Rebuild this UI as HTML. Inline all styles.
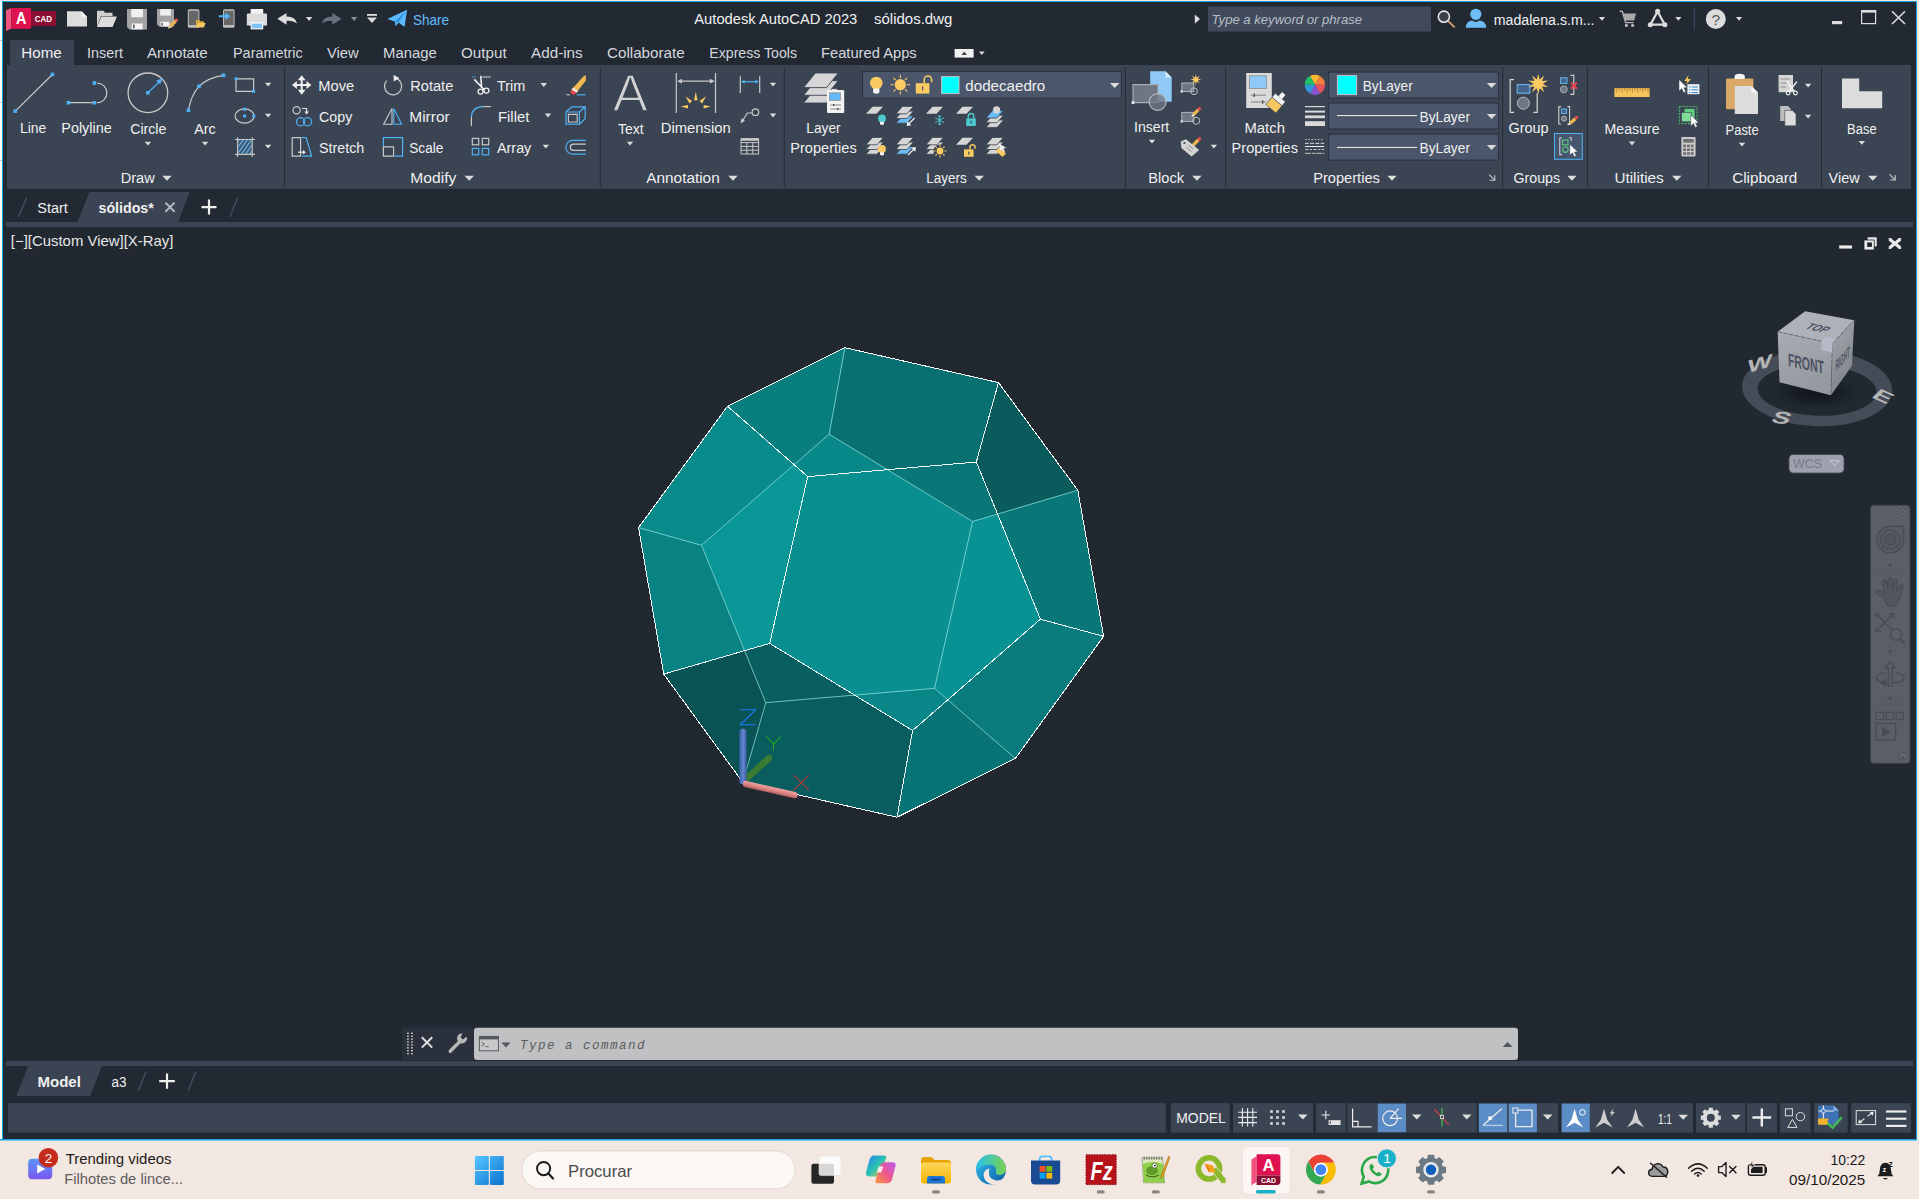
<!DOCTYPE html>
<html lang="en"><head><meta charset="utf-8"><title>Autodesk AutoCAD 2023 - sólidos.dwg</title>
<style>
html,body{margin:0;padding:0;background:#f3e7e2;overflow:hidden}
body{width:1919px;height:1199px;position:relative;font-family:"Liberation Sans",sans-serif}
svg{position:absolute;left:0;top:0;display:block}
text{white-space:pre}
</style></head><body>
<svg width="1919" height="1199" viewBox="0 0 1919 1199">
<rect x="0" y="0" width="1919" height="1199" fill="#f3e7e2" />
<rect x="0" y="0" width="2" height="1139" fill="#ffffff" />
<rect x="0" y="40" width="2" height="1" fill="#c8c8c8" />
<rect x="0" y="102" width="2" height="1" fill="#c8c8c8" />
<rect x="0" y="160" width="2" height="1" fill="#c8c8c8" />
<rect x="2" y="1" width="1915" height="1139" fill="#1a9fe0" />
<rect x="3" y="2" width="1913" height="1137" fill="#222933" />
<rect x="10" y="40" width="64" height="26" fill="#3b4453" />
<rect x="7" y="65" width="1904" height="123.8" fill="#3b4453" />
<rect x="6" y="222" width="1907" height="5" fill="#3b4453" />
<rect x="3" y="227" width="1913" height="834" fill="#212830" />
<rect x="6" y="1061" width="1907" height="5" fill="#3b4453" />
<path d="M15.3 111.1L52.4 74.5" fill="none" stroke="#c9c9c9" stroke-width="1.2" />
<rect x="13.5" y="109.3" width="3.6" height="3.6" fill="#4db2f5" />
<rect x="50.6" y="72.7" width="3.6" height="3.6" fill="#4db2f5" />
<path d="M68.5 102.7H94.4M97 83A9.85 9.85 0 0 1 97 102.7" fill="none" stroke="#c9c9c9" stroke-width="1.2" />
<rect x="66.7" y="100.9" width="3.6" height="3.6" fill="#4db2f5" />
<rect x="92.6" y="100.9" width="3.6" height="3.6" fill="#4db2f5" />
<rect x="92.6" y="81.2" width="3.6" height="3.6" fill="#4db2f5" />
<circle cx="147.9" cy="92.8" r="19.8" fill="none" stroke="#c9c9c9" stroke-width="1.3"/>
<path d="M148 92.8L160 81" fill="none" stroke="#4db2f5" stroke-width="1.2" />
<path d="M162.6 78.2L156.2 80.6L160.2 84.6z" fill="#4db2f5"/>
<rect x="146.1" y="91.0" width="3.6" height="3.6" fill="#4db2f5" />
<path d="M188.4 110.3Q191 95 199 86.3Q208 77.5 223.5 75.3" fill="none" stroke="#c9c9c9" stroke-width="1.2" />
<rect x="186.6" y="108.5" width="3.6" height="3.6" fill="#4db2f5" />
<rect x="197.2" y="84.5" width="3.6" height="3.6" fill="#4db2f5" />
<rect x="221.7" y="73.5" width="3.6" height="3.6" fill="#4db2f5" />
<path d="M236 78.8H253.6V91.3H236z" fill="none" stroke="#c9c9c9" stroke-width="1.2" />
<rect x="234.5" y="77.3" width="3" height="3" fill="#4db2f5" />
<rect x="252.1" y="89.8" width="3" height="3" fill="#4db2f5" />
<path d="M264.9 82.7h6.4l-3.2 3.8z" fill="#dcdcdc"/>
<ellipse cx="244.6" cy="116" rx="9.5" ry="7.2" fill="none" stroke="#c9c9c9" stroke-width="1.2"/>
<rect x="243.1" y="107.7" width="3" height="3" fill="#4db2f5" />
<rect x="243.1" y="114.5" width="3" height="3" fill="#4db2f5" />
<rect x="252.3" y="114.5" width="3" height="3" fill="#4db2f5" />
<path d="M264.9 113.7h6.4l-3.2 3.8z" fill="#dcdcdc"/>
<defs><pattern id="hat" width="3.4" height="3.4" patternUnits="userSpaceOnUse" patternTransform="rotate(-55)"><rect width="3.4" height="3.4" fill="#3d5671"/><rect width="3.4" height="1.1" fill="#6cc0f8"/></pattern></defs>
<rect x="238.2" y="140" width="13.6" height="13.8" fill="url(#hat)" />
<path d="M237.6 137.2V157M252.2 137.2V157M235 139.5H255M235 154.4H255" fill="none" stroke="#c9c9c9" stroke-width="1.1" />
<path d="M264.9 144.7h6.4l-3.2 3.8z" fill="#dcdcdc"/>
<path d="M144.7 141.7h6.4l-3.2 3.8z" fill="#dcdcdc"/>
<path d="M201.9 141.7h6.4l-3.2 3.8z" fill="#dcdcdc"/>
<path d="M162.3 175.7h9.4l-4.7 5z" fill="#dcdcdc"/>
<path d="M301.7 75.3L305.6 80.2H302.7V84H306.5V81.1L311.4 85L306.5 88.9V86H302.7V89.8H305.6L301.7 94.7L297.8 89.8H300.7V86H296.9V88.9L292 85L296.9 81.1V84H300.7V80.2H297.8z" fill="#f0f0f0"/>
<circle cx="296.6" cy="110.3" r="3.6" fill="none" stroke="#c9c9c9" stroke-width="1.2"/>
<path d="M302 108.5H306.6V112" fill="none" stroke="#e0e0e0" stroke-width="1.2" />
<path d="M304.2 111.4H309L306.6 114.6z" fill="#e0e0e0"/>
<circle cx="300.6" cy="121.7" r="4.1" fill="none" stroke="#4db2f5" stroke-width="1.2"/><circle cx="307.6" cy="121.7" r="4.1" fill="none" stroke="#4db2f5" stroke-width="1.2"/>
<path d="M292.2 137.6H300.6V156.2H292.2z" fill="none" stroke="#c9c9c9" stroke-width="1.2" />
<path d="M302 137.6H306.2L311.6 156.2H302" fill="none" stroke="#4db2f5" stroke-width="1.2" />
<path d="M298 152.2H303.5" fill="none" stroke="#f0f0f0" stroke-width="1.2" />
<path d="M303 150L305.8 152.2L303 154.4z" fill="#f0f0f0"/>
<path d="M396.6 78.4A8.6 8.6 0 1 1 386.6 80.6" fill="none" stroke="#c9c9c9" stroke-width="1.3" />
<path d="M393.6 75L399.4 78L393.8 81.6z" fill="#f0f0f0"/>
<path d="M383.6 124.2H392V108.4z" fill="none" stroke="#c9c9c9" stroke-width="1.1" />
<path d="M393.8 108.4V124.2H401.6z" fill="none" stroke="#4db2f5" stroke-width="1.1" />
<path d="M383.4 146V137.6H402.6V156.2H394.4" fill="none" stroke="#4db2f5" stroke-width="1.2" />
<path d="M383.4 146.8H393.6V156.2H383.4z" fill="none" stroke="#c9c9c9" stroke-width="1.2" />
<path d="M472 77H476" fill="none" stroke="#4db2f5" stroke-width="1.1" stroke-dasharray="1.5 1"/>
<path d="M482.4 77H490.8" fill="none" stroke="#c9c9c9" stroke-width="1.1" />
<path d="M480.8 75.8L481.6 88M474.2 79.4L484.6 90" fill="none" stroke="#f0f0f0" stroke-width="1.6" />
<circle cx="480.6" cy="91.6" r="2.5" fill="none" stroke="#f0f0f0" stroke-width="1.3"/><circle cx="486.4" cy="90.6" r="2.5" fill="none" stroke="#f0f0f0" stroke-width="1.3"/>
<path d="M471.4 126V117" fill="none" stroke="#c9c9c9" stroke-width="1.2" />
<path d="M471.4 117Q471.8 107 483 106.6" fill="none" stroke="#4db2f5" stroke-width="1.2" />
<path d="M483 106.6H490.8" fill="none" stroke="#c9c9c9" stroke-width="1.2" />
<rect x="472.3" y="138.4" width="6.4" height="6.4" fill="none" stroke="#c9c9c9" stroke-width="1.2"/>
<rect x="482.3" y="138.4" width="6.4" height="6.4" fill="none" stroke="#c9c9c9" stroke-width="1.2"/>
<rect x="472.3" y="148.4" width="6.4" height="6.4" fill="none" stroke="#4db2f5" stroke-width="1.2"/>
<rect x="482.3" y="148.4" width="6.4" height="6.4" fill="none" stroke="#4db2f5" stroke-width="1.2"/>
<path d="M540.6 83.1h6.4l-3.2 3.8z" fill="#dcdcdc"/>
<path d="M544.8 113.6h6.4l-3.2 3.8z" fill="#dcdcdc"/>
<path d="M542.6 144.8h6.4l-3.2 3.8z" fill="#dcdcdc"/>
<path d="M464.5 175.7h9.4l-4.7 5z" fill="#dcdcdc"/>
<path d="M571.6 89.4L583.4 76.4L585.8 75V80.6L576.4 92.8z" fill="#efb94d"/><path d="M571.6 89.4L576.4 92.8L575 94.2Q572.6 95 571 93.2Q570 91.2 571.6 89.4z" fill="#e8484f"/><path d="M573.4 87.4L578.2 90.8L576.4 92.8L571.6 89.4z" fill="#f4e9e0"/>
<path d="M566.4 94.8H569.8" fill="none" stroke="#c9c9c9" stroke-width="1.1" />
<path d="M576.6 94.8H585.8" fill="none" stroke="#4db2f5" stroke-width="1.1" />
<path d="M566 112H579.4V124.2H566zM566 112L571.6 106.8H585.2L579.4 112M585.2 106.8V118.8L579.4 124.2" fill="none" stroke="#4db2f5" stroke-width="1.2" />
<path d="M568.4 114.4H577.2V122H568.4z" fill="none" stroke="#c9c9c9" stroke-width="1.1" />
<path d="M585.8 140.4H572.8A6.9 6.9 0 0 0 572.8 154.2H585.8" fill="none" stroke="#4db2f5" stroke-width="1.2" />
<path d="M585.8 144.2H573.4A3.1 3.1 0 0 0 573.4 150.4H585.8" fill="none" stroke="#c9c9c9" stroke-width="1.2" />
<text x="612.8" y="110.9" textLength="35.2" lengthAdjust="spacingAndGlyphs" font-family='"Liberation Sans", sans-serif' font-size="51" fill="#d2d2d2" font-weight="normal" font-style="normal" stroke="#3b4453" stroke-width="1.5">A</text>
<path d="M626.8 141.8h6.4l-3.2 3.8z" fill="#dcdcdc"/>
<path d="M676.3 73V113M715.5 73V113M679 81.2H713" fill="none" stroke="#c9c9c9" stroke-width="1.2" />
<path d="M677 81.2L682 78.8V83.6zM714.8 81.2L709.8 78.8V83.6z" fill="#c9c9c9"/>
<path d="M695.8 92L697.6 100.2H694zM685.4 96.2L692 101L689.6 103.4zM706.2 96.2L699.6 101L702 103.4zM680.8 106.4L688 105V108.6zM710.8 106.4L703.6 105V108.6z" fill="#f9cb62"/>
<path d="M740.3 76.3V93M759.7 76.3V93" fill="none" stroke="#c9c9c9" stroke-width="1.2" />
<path d="M743 81.7H757" fill="none" stroke="#4db2f5" stroke-width="1.2" />
<path d="M741 81.7L744.6 79.7V83.7zM759 81.7L755.4 79.7V83.7z" fill="#4db2f5"/>
<path d="M769.8 82.8h6.4l-3.2 3.8z" fill="#dcdcdc"/>
<circle cx="755.4" cy="112.2" r="3.3" fill="none" stroke="#c9c9c9" stroke-width="1.2"/>
<path d="M752.2 113H747.4L742.6 120.6" fill="none" stroke="#c9c9c9" stroke-width="1.2" />
<path d="M740.6 123.4L741.4 118.4L745 120.8z" fill="#c9c9c9"/>
<path d="M769.8 113.6h6.4l-3.2 3.8z" fill="#dcdcdc"/>
<path d="M741 138.6H758.6V154H741zM741 142.6H758.6M741 146.4H758.6M741 150.2H758.6M746.8 142.6V154M752.8 142.6V154" fill="none" stroke="#c9c9c9" stroke-width="1" />
<rect x="741" y="138.6" width="17.6" height="2.2" fill="#c9c9c9" />
<path d="M728.3 175.7h9.4l-4.7 5z" fill="#dcdcdc"/>
<path d="M815.4 88.4H838.2L826.6 103.0H803.6z" fill="#d6d6d6" stroke="#3b4453" stroke-width="0.9"/>
<path d="M815.4 80.7H838.2L826.6 95.3H803.6z" fill="#d6d6d6" stroke="#3b4453" stroke-width="0.9"/>
<path d="M815.4 73.0H838.2L826.6 87.6H803.6z" fill="#d6d6d6" stroke="#3b4453" stroke-width="0.9"/>
<rect x="827" y="90" width="17.2" height="23" rx="1" fill="#f2f2f2"/>
<rect x="829.6" y="92.8" width="10.8" height="7.6" fill="#62b8f5" />
<rect x="829.6" y="92.8" width="10.8" height="7.6" fill="none" stroke="#8a8a8a" stroke-width="0.7"/>
<path d="M830.4 105H841M830.4 109H841" fill="none" stroke="#777" stroke-width="0.9" />
<rect x="833" y="104" width="1.4" height="2" fill="#555" />
<rect x="837" y="108" width="1.4" height="2" fill="#555" />
<rect x="862.5" y="71.5" width="258.8" height="26.8" fill="#4b566b" stroke="#2a303c" stroke-width="1"/>
<circle cx="876.3" cy="83" r="6.3" fill="#f9cb62"/><path d="M873.1 88.4H879.4V92.5Q876.3 95.0 873.1 92.5z" fill="#f4f4f4"/>
<circle cx="900.3" cy="84.7" r="5.6" fill="#f9cb62"/><path d="M906.9 84.7L910.1 84.7M905.0 89.4L907.2 91.6M900.3 91.3L900.3 94.5M895.6 89.4L893.4 91.6M893.7 84.7L890.5 84.7M895.6 80.0L893.4 77.8M900.3 78.1L900.3 74.9M905.0 80.0L907.2 77.8" stroke="#f9cb62" stroke-width="1.1" fill="none"/>
<rect x="915.8" y="83.2" width="13.6" height="10.4" fill="#f9cb62" />
<path d="M924.2 83.2V79.6A3.7 3.7 0 0 1 931.6 79.6V82.2" fill="none" stroke="#f9cb62" stroke-width="1.5"/>
<rect x="922.0" y="86.3" width="1.2" height="4.2" fill="#4b566b" />
<rect x="941.6" y="76.6" width="17.4" height="17" fill="#00ffff" stroke="#c4c4c4" stroke-width="1"/>
<path d="M1109.9 82.9h9.6l-4.8 5z" fill="#dcdcdc"/>
<path d="M872.5 106.8H883.0L876.5 113.8H866.0z" fill="#d6d6d6"/>
<circle cx="882" cy="118.4" r="3.9" fill="#4fc9d0"/><path d="M880.0 121.7H884.0V124.2Q882 125.8 880.0 124.2z" fill="#f4f4f4"/>
<path d="M902.5 115.8H913.5L907.0 123.2H896.0z" fill="#6bbcf3" stroke="#3b4453" stroke-width="0.8"/>
<path d="M902.5 111.1H913.5L907.0 118.5H896.0z" fill="#d6d6d6" stroke="#3b4453" stroke-width="0.8"/>
<path d="M902.5 106.4H913.5L907.0 113.8H896.0z" fill="#d6d6d6" stroke="#3b4453" stroke-width="0.8"/>
<path d="M914.6 118L908.6 124" fill="none" stroke="#f0f0f0" stroke-width="1.2" />
<path d="M906.6 126L907.4 121.2L911.4 125.2z" fill="#f0f0f0"/>
<path d="M932.5 106.8H943.0L936.5 113.8H926.0z" fill="#d6d6d6"/>
<path d="M939.6 115.2V125.2M935.3 117.7L943.9 122.7M935.3 122.7L943.9 117.7M938 115.8L939.6 117.2L941.2 115.8M938 124.6L939.6 123.2L941.2 124.6" fill="none" stroke="#4fc9d0" stroke-width="1" />
<path d="M962.5 106.8H973.0L966.5 113.8H956.0z" fill="#d6d6d6"/>
<rect x="966.2" y="118.4" width="9.6" height="7.6" fill="#4fc9d0" />
<path d="M968.3 118.4V116.1A2.7 2.7 0 0 1 973.7 116.1V118.4" fill="none" stroke="#4fc9d0" stroke-width="1.5"/>
<rect x="970.4" y="120.7" width="1.2" height="3.0" fill="#3b4453" />
<path d="M992.5 120.0H1003.5L997.0 127.4H986.0z" fill="#d6d6d6" stroke="#3b4453" stroke-width="0.8"/>
<path d="M992.5 115.3H1003.5L997.0 122.7H986.0z" fill="#d6d6d6" stroke="#3b4453" stroke-width="0.8"/>
<path d="M992.5 110.6H1003.5L997.0 118.0H986.0z" fill="#6bbcf3" stroke="#3b4453" stroke-width="0.8"/>
<circle cx="996.6" cy="109.8" r="3.6" fill="#d6d6d6"/>
<path d="M872.5 146.8H883.5L877.0 154.2H866.0z" fill="#d6d6d6" stroke="#3b4453" stroke-width="0.8"/>
<path d="M872.5 142.1H883.5L877.0 149.5H866.0z" fill="#d6d6d6" stroke="#3b4453" stroke-width="0.8"/>
<path d="M872.5 137.4H883.5L877.0 144.8H866.0z" fill="#d6d6d6" stroke="#3b4453" stroke-width="0.8"/>
<circle cx="882" cy="149" r="3.9" fill="#f9cb62"/><path d="M880.0 152.3H884.0V154.8Q882 156.4 880.0 154.8z" fill="#f4f4f4"/>
<path d="M902.5 146.8H913.5L907.0 154.2H896.0z" fill="#6bbcf3" stroke="#3b4453" stroke-width="0.8"/>
<path d="M902.5 142.1H913.5L907.0 149.5H896.0z" fill="#d6d6d6" stroke="#3b4453" stroke-width="0.8"/>
<path d="M902.5 137.4H913.5L907.0 144.8H896.0z" fill="#d6d6d6" stroke="#3b4453" stroke-width="0.8"/>
<path d="M908 155L914 149" fill="none" stroke="#f0f0f0" stroke-width="1.2" />
<path d="M916 147L915.2 151.8L911.2 147.8z" fill="#f0f0f0"/>
<path d="M932.5 146.8H943.5L937.0 154.2H926.0z" fill="#d6d6d6" stroke="#3b4453" stroke-width="0.8"/>
<path d="M932.5 142.1H943.5L937.0 149.5H926.0z" fill="#d6d6d6" stroke="#3b4453" stroke-width="0.8"/>
<path d="M932.5 137.4H943.5L937.0 144.8H926.0z" fill="#d6d6d6" stroke="#3b4453" stroke-width="0.8"/>
<circle cx="940" cy="151" r="6.6" fill="#3b4453"/>
<circle cx="940" cy="151" r="3.4" fill="#f9cb62"/><path d="M944.4 151.0L946.4 151.0M943.1 154.1L944.5 155.5M940.0 155.4L940.0 157.4M936.9 154.1L935.5 155.5M935.6 151.0L933.6 151.0M936.9 147.9L935.5 146.5M940.0 146.6L940.0 144.6M943.1 147.9L944.5 146.5" stroke="#f9cb62" stroke-width="1.1" fill="none"/>
<path d="M962.5 137.8H973.0L966.5 144.8H956.0z" fill="#d6d6d6"/>
<rect x="964" y="149.4" width="9.6" height="7.4" fill="#f9cb62" />
<path d="M970.0 149.4V146.8A2.6 2.6 0 0 1 975.1 146.8V148.7" fill="none" stroke="#f9cb62" stroke-width="1.5"/>
<rect x="968.2" y="151.6" width="1.2" height="3.0" fill="#3b4453" />
<path d="M992.5 146.8H1003.5L997.0 154.2H986.0z" fill="#d6d6d6" stroke="#3b4453" stroke-width="0.8"/>
<path d="M992.5 142.1H1003.5L997.0 149.5H986.0z" fill="#d6d6d6" stroke="#3b4453" stroke-width="0.8"/>
<path d="M992.5 137.4H1003.5L997.0 144.8H986.0z" fill="#d6d6d6" stroke="#3b4453" stroke-width="0.8"/>
<path d="M995.6 150.8L1000 147.6L1006 153.6L1002.4 157z" fill="#f9cb62"/><path d="M999 143.6L1006.4 148L1003.4 148.6L1005 151.4L1003.6 152L1002 149.4L1000 151z" fill="#f0f0f0"/>
<path d="M974.5 175.7h9.4l-4.7 5z" fill="#dcdcdc"/>
<path d="M1150.2 71.3H1165.5L1171.7 77.5V101.7H1150.2z" fill="#8fcaf7"/><path d="M1165.5 71.3V77.5H1171.7z" fill="#d6ecfc"/>
<rect x="1133" y="84.6" width="25" height="18" fill="#6e7683" stroke="#a9adb5" stroke-width="1.2"/>
<circle cx="1157.6" cy="102" r="8.4" fill="#6e7683" fill-opacity="0.75" stroke="#b4b8bf" stroke-width="1.2"/>
<rect x="1131.6" y="101.2" width="2.8" height="2.8" fill="#e8e8e8" />
<path d="M1148.8 139.8h6.4l-3.2 3.8z" fill="#dcdcdc"/>
<rect x="1181.8" y="83" width="12" height="8.6" fill="#6e7683" stroke="#b0b4bb" stroke-width="1"/>
<circle cx="1194" cy="91.2" r="3.4" fill="none" stroke="#c0c4ca" stroke-width="1"/>
<rect x="1180.6" y="90.4" width="2.2" height="2.2" fill="#e0e0e0" />
<polygon points="1195.8,74.2 1196.6,77.6 1199.6,75.8 1197.8,78.8 1201.2,79.6 1197.8,80.4 1199.6,83.4 1196.6,81.6 1195.8,85.0 1195.0,81.6 1192.0,83.4 1193.8,80.4 1190.4,79.6 1193.8,78.8 1192.0,75.8 1195.0,77.6" fill="#f9cb62"/>
<rect x="1181.8" y="112.4" width="12" height="9" fill="#6e7683" stroke="#b0b4bb" stroke-width="1"/>
<circle cx="1196.2" cy="120.8" r="3.5" fill="none" stroke="#c0c4ca" stroke-width="1"/>
<rect x="1180.6" y="120.4" width="2.2" height="2.2" fill="#e0e0e0" />
<g transform="translate(1191.4,116.8) rotate(-45.6)"><path d="M0 0L3.2 -1.6V1.6z" fill="#e8dcc8"/><rect x="3.2" y="-1.6" width="6.4" height="3.2" fill="#f2b84f"/><rect x="9.7" y="-1.6" width="3.2" height="3.2" rx="1" fill="#e8484f"/></g>
<path d="M1180.8 141.4L1186 139.2L1199.2 150L1191.6 156.4L1181.4 148z" fill="#d4d4d4"/><circle cx="1184.4" cy="143" r="1.1" fill="#3b4453"/>
<path d="M1186.4 147.2L1191.4 151.4M1188.6 145L1193.4 149" fill="none" stroke="#777" stroke-width="0.8" />
<g transform="translate(1191.2,147.2) rotate(-45.6)"><path d="M0 0L3.4 -1.6V1.6z" fill="#e8dcc8"/><rect x="3.4" y="-1.6" width="6.7" height="3.2" fill="#f2b84f"/><rect x="10.1" y="-1.6" width="3.4" height="3.2" rx="1" fill="#e8484f"/></g>
<path d="M1210.7 144.7h6.4l-3.2 3.8z" fill="#dcdcdc"/>
<path d="M1192.2 175.7h9.4l-4.7 5z" fill="#dcdcdc"/>
<rect x="1246.2" y="73" width="25.6" height="35" fill="#dadada"/>
<rect x="1249.4" y="75.8" width="17.2" height="12.6" fill="#8fcaf7" stroke="#8a8a8a" stroke-width="0.8"/>
<path d="M1251 95.2H1266M1251 102H1266" fill="none" stroke="#777" stroke-width="0.9" />
<rect x="1253.6" y="93.4" width="1.4" height="3.6" fill="#555" />
<rect x="1262" y="100.2" width="1.4" height="3.6" fill="#555" />
<g transform="translate(1278.6,99.6) rotate(40)"><rect x="-6.6" y="2.4" width="13.2" height="9.6" fill="#f5c862" stroke="#3b4453" stroke-width="0.6"/><rect x="-6.6" y="-2.6" width="13.2" height="5" fill="#f4f4f4" stroke="#3b4453" stroke-width="0.5"/><rect x="-2.2" y="-8" width="4.4" height="5.6" fill="#f4f4f4"/></g>
<path d="M1314.9 84.8L1309.9 76.1A10.1 10.1 0 0 1 1320.0 76.1z" fill="#f7b731"/>
<path d="M1314.9 84.8L1320.0 76.1A10.1 10.1 0 0 1 1325.0 84.8z" fill="#f5803e"/>
<path d="M1314.9 84.8L1325.0 84.8A10.1 10.1 0 0 1 1320.0 93.5z" fill="#e8505b"/>
<path d="M1314.9 84.8L1320.0 93.5A10.1 10.1 0 0 1 1309.9 93.5z" fill="#8854d0"/>
<path d="M1314.9 84.8L1309.9 93.5A10.1 10.1 0 0 1 1304.8 84.8z" fill="#2d98da"/>
<path d="M1314.9 84.8L1304.8 84.8A10.1 10.1 0 0 1 1309.9 76.1z" fill="#20bf6b"/>
<rect x="1328.6" y="72.10000000000001" width="169.8" height="26" fill="#4b566b" stroke="#2a303c" stroke-width="1"/>
<rect x="1328.6" y="103.0" width="169.8" height="26" fill="#4b566b" stroke="#2a303c" stroke-width="1"/>
<rect x="1328.6" y="134.1" width="169.8" height="26" fill="#4b566b" stroke="#2a303c" stroke-width="1"/>
<rect x="1337.4" y="75.6" width="19.2" height="19" fill="#00ffff" stroke="#c4c4c4" stroke-width="1"/>
<rect x="1337" y="115" width="80" height="1.1" fill="#e4e4e4" />
<rect x="1337" y="146.9" width="80" height="1.1" fill="#e4e4e4" />
<path d="M1486.8 83.0h9.6l-4.8 5z" fill="#dcdcdc"/>
<path d="M1486.8 114.0h9.6l-4.8 5z" fill="#dcdcdc"/>
<path d="M1486.8 145.0h9.6l-4.8 5z" fill="#dcdcdc"/>
<rect x="1305" y="106" width="20" height="1.2" fill="#dadada" />
<rect x="1305" y="110.6" width="20" height="2" fill="#dadada" />
<rect x="1305" y="115.4" width="20" height="2.8" fill="#dadada" />
<rect x="1305" y="121.2" width="20" height="4.8" fill="#dadada" />
<line x1="1305" y1="139.5" x2="1324.2" y2="139.5" stroke="#c4c4c4" stroke-width="1.1" stroke-dasharray="1.6 1.6"/>
<line x1="1305" y1="143.4" x2="1324.2" y2="143.4" stroke="#c4c4c4" stroke-width="1.1" stroke-dasharray="3.8 1.4"/>
<line x1="1305" y1="146.5" x2="1324.2" y2="146.5" stroke="#ececec" stroke-width="1.1" stroke-dasharray="20 0"/>
<line x1="1305" y1="149.5" x2="1324.2" y2="149.5" stroke="#c4c4c4" stroke-width="1.1" stroke-dasharray="3.4 1.4 2.2 1.4"/>
<line x1="1305" y1="153.4" x2="1324.2" y2="153.4" stroke="#a8a8a8" stroke-width="1.1" stroke-dasharray="6 0.8 3.5 0.8"/>
<path d="M1387.3 175.7h9.4l-4.7 5z" fill="#dcdcdc"/>
<path d="M1489.2 174.6L1494.2 179.6M1494.8 175.2V180.2H1489.8" fill="none" stroke="#c8c8c8" stroke-width="1.1" />
<path d="M1889.6 174.4L1894.6 179.4M1895.1999999999998 175.0V180.0H1890.1999999999998" fill="none" stroke="#c8c8c8" stroke-width="1.1" />
<path d="M1514 79.6H1510.2V112.4H1514M1537.2 93V112.4H1533.4" fill="none" stroke="#d8d8d8" stroke-width="1.2" />
<rect x="1517.2" y="84.6" width="12.6" height="8.6" fill="#46658c" stroke="#6bbcf3" stroke-width="1"/><circle cx="1523.4" cy="103.2" r="6" fill="#6e7683" stroke="#b4b8bf" stroke-width="1"/>
<polygon points="1538.2,73.4 1539.6,79.4 1544.3,75.4 1541.9,81.1 1548.1,80.6 1542.8,83.8 1548.1,87.0 1541.9,86.5 1544.3,92.2 1539.6,88.2 1538.2,94.2 1536.8,88.2 1532.1,92.2 1534.5,86.5 1528.3,87.0 1533.6,83.8 1528.3,80.6 1534.5,81.1 1532.1,75.4 1536.8,79.4" fill="#f9cb62"/>
<path d="M1570.4 75.4H1573.8V94.4H1570.4" fill="none" stroke="#d0d0d0" stroke-width="1.1" />
<rect x="1560.4" y="77.8" width="6.6" height="5.6" fill="#46658c" stroke="#6bbcf3" stroke-width="0.9"/><circle cx="1563.8" cy="89.4" r="3.4" fill="#6e7683" stroke="#b4b8bf" stroke-width="0.9"/>
<path d="M1571 82.6L1576.8 88.8M1576.8 82.6L1571 88.8" fill="none" stroke="#f0464f" stroke-width="2" />
<path d="M1561 106.6H1558.8V124H1561M1567.4 106.6H1569.6V124H1567.4" fill="none" stroke="#d0d0d0" stroke-width="1.1" />
<rect x="1561.4" y="109" width="5.2" height="4.6" fill="#46658c" stroke="#6bbcf3" stroke-width="0.9"/><circle cx="1564" cy="118.6" r="2.6" fill="#6e7683" stroke="#b4b8bf" stroke-width="0.9"/>
<g transform="translate(1567.6,125.6) rotate(-42.0)"><path d="M0 0L3.4 -1.6V1.6z" fill="#e8dcc8"/><rect x="3.4" y="-1.6" width="6.9" height="3.2" fill="#f2b84f"/><rect x="10.3" y="-1.6" width="3.4" height="3.2" rx="1" fill="#e8484f"/></g>
<rect x="1554.5" y="133.5" width="27.8" height="25.8" fill="#45566e" stroke="#4db2f5" stroke-width="1"/>
<path d="M1562 137.8H1559.8V154.6H1562M1569 137.8H1571.2V141" fill="none" stroke="#d0d0d0" stroke-width="1.1" />
<rect x="1562.6" y="140" width="5.4" height="4.8" fill="none" stroke="#5fd07f" stroke-width="1.1"/><circle cx="1565.4" cy="149.6" r="2.8" fill="none" stroke="#5fd07f" stroke-width="1.1"/>
<path transform="translate(1569.8,144.2) scale(0.95)" d="M0 0V11.5L2.8 9L4.8 13.2L6.8 12.2L4.8 8.2H8.4z" fill="#ffffff" stroke="#3b4453" stroke-width="0.5"/>
<path d="M1567.2 175.7h9.4l-4.7 5z" fill="#dcdcdc"/>
<rect x="1614.4" y="88.2" width="35.2" height="8.8" fill="#f5c45a" />
<rect x="1616.4" y="88.2" width="0.9" height="4.4" fill="#b8892e" />
<rect x="1619.0" y="88.2" width="0.9" height="2.8" fill="#b8892e" />
<rect x="1621.6" y="88.2" width="0.9" height="4.4" fill="#b8892e" />
<rect x="1624.2" y="88.2" width="0.9" height="2.8" fill="#b8892e" />
<rect x="1626.8" y="88.2" width="0.9" height="4.4" fill="#b8892e" />
<rect x="1629.4" y="88.2" width="0.9" height="2.8" fill="#b8892e" />
<rect x="1632.0" y="88.2" width="0.9" height="4.4" fill="#b8892e" />
<rect x="1634.6" y="88.2" width="0.9" height="2.8" fill="#b8892e" />
<rect x="1637.2" y="88.2" width="0.9" height="4.4" fill="#b8892e" />
<rect x="1639.8" y="88.2" width="0.9" height="2.8" fill="#b8892e" />
<rect x="1642.4" y="88.2" width="0.9" height="4.4" fill="#b8892e" />
<rect x="1645.0" y="88.2" width="0.9" height="2.8" fill="#b8892e" />
<rect x="1647.6" y="88.2" width="0.9" height="4.4" fill="#b8892e" />
<path d="M1628.8 141.6h6.4l-3.2 3.8z" fill="#dcdcdc"/>
<path transform="translate(1679,79.6) scale(1.0)" d="M0 0V11.5L2.8 9L4.8 13.2L6.8 12.2L4.8 8.2H8.4z" fill="#ffffff" stroke="#3b4453" stroke-width="0.5"/>
<rect x="1687.4" y="84.2" width="12" height="10" fill="#f4f4f4"/>
<rect x="1691.6" y="86.4" width="6.4" height="1.1" fill="#3a8fd8" />
<rect x="1689" y="86.4" width="1.4" height="1.1" fill="#3a8fd8" />
<rect x="1691.6" y="89.2" width="6.4" height="1.1" fill="#3a8fd8" />
<rect x="1689" y="89.2" width="1.4" height="1.1" fill="#3a8fd8" />
<rect x="1691.6" y="92" width="6.4" height="1.1" fill="#3a8fd8" />
<rect x="1689" y="92" width="1.4" height="1.1" fill="#3a8fd8" />
<path d="M1688.6 75L1684.4 81H1687.4L1685.8 85L1691 79H1687.8z" fill="#f9cb62"/>
<rect x="1679.4" y="106.6" width="17.6" height="17" fill="none" stroke="#4fc06a" stroke-width="1" stroke-dasharray="2 1.2"/><rect x="1684.6" y="108.8" width="10" height="9.4" fill="#5fcf7f"/><rect x="1681.6" y="112.4" width="10" height="9.4" fill="#7fdc98" stroke="#3b4453" stroke-width="0.6"/>
<path transform="translate(1690.8,115) scale(0.95)" d="M0 0V11.5L2.8 9L4.8 13.2L6.8 12.2L4.8 8.2H8.4z" fill="#ffffff" stroke="#3b4453" stroke-width="0.5"/>
<rect x="1681.4" y="137" width="14.2" height="19.6" rx="1" fill="#cacaca"/>
<rect x="1683.2" y="139" width="10.6" height="3.6" fill="#6e6e6e" />
<rect x="1683.2" y="144.6" width="2.8" height="2.6" fill="#6e6e6e" />
<rect x="1687.0" y="144.6" width="2.8" height="2.6" fill="#6e6e6e" />
<rect x="1690.8" y="144.6" width="2.8" height="2.6" fill="#6e6e6e" />
<rect x="1683.2" y="148.4" width="2.8" height="2.6" fill="#6e6e6e" />
<rect x="1687.0" y="148.4" width="2.8" height="2.6" fill="#6e6e6e" />
<rect x="1690.8" y="148.4" width="2.8" height="2.6" fill="#6e6e6e" />
<rect x="1683.2" y="152.2" width="2.8" height="2.6" fill="#6e6e6e" />
<rect x="1687.0" y="152.2" width="2.8" height="2.6" fill="#6e6e6e" />
<rect x="1690.8" y="152.2" width="2.8" height="2.6" fill="#6e6e6e" />
<path d="M1672.1 175.7h9.4l-4.7 5z" fill="#dcdcdc"/>
<rect x="1726" y="78.4" width="27.4" height="30.8" rx="1.2" fill="#d9a766"/><path d="M1734.6 79V76.4Q1734.6 74 1739.6 73.8Q1744.8 74 1744.8 76.4V79z" fill="#f4f4f4"/>
<path d="M1734.8 86H1751.4L1758 92.6V114H1734.8z" fill="#dcdcdc"/><path d="M1751.4 86V92.6H1758z" fill="#f8f8f8"/>
<path d="M1738.8 142.7h6.4l-3.2 3.8z" fill="#dcdcdc"/>
<rect x="1778.6" y="75" width="14.4" height="17.2" fill="#d4d4d4"/>
<path d="M1780.6 79H1790M1780.6 83H1788M1780.6 87H1786" fill="none" stroke="#8a8a8a" stroke-width="0.9" />
<path d="M1786.6 81L1794.4 91.4M1796.8 81.6L1789.4 91.4" fill="none" stroke="#f4f4f4" stroke-width="1.5" />
<circle cx="1788.2" cy="93" r="1.9" fill="none" stroke="#f4f4f4" stroke-width="1.1"/><circle cx="1795.4" cy="93" r="1.9" fill="none" stroke="#f4f4f4" stroke-width="1.1"/>
<path d="M1804.9 83.7h6.4l-3.2 3.8z" fill="#dcdcdc"/>
<path d="M1780.2 106H1788L1791 109V121H1780.2z" fill="#bdbdbd"/><path d="M1784.8 110.4H1792.4L1796 114V125.8H1784.8z" fill="#dcdcdc" stroke="#3b4453" stroke-width="0.6"/>
<path d="M1804.9 114.7h6.4l-3.2 3.8z" fill="#dcdcdc"/>
<path d="M1842 78.4H1859.2V91.2H1882.2V108.2H1842z" fill="#dcdcdc"/>
<path d="M1858.6 141.0h6.4l-3.2 3.8z" fill="#dcdcdc"/>
<path d="M1868.1 175.7h9.4l-4.7 5z" fill="#dcdcdc"/>
<path d="M6 10.3L11.3 8V28.8L6 31z" fill="#f0557f"/>
<rect x="11.3" y="8" width="19.7" height="20.8" fill="#e0114f" />
<rect x="31" y="11" width="25" height="15" fill="#8a0e33" />
<text x="16.0" y="23.9" textLength="10.4" lengthAdjust="spacingAndGlyphs" font-family='"Liberation Sans", sans-serif' font-size="15.6" fill="#ffffff" font-weight="bold" font-style="normal" >A</text>
<text x="34.8" y="21.8" textLength="17.2" lengthAdjust="spacingAndGlyphs" font-family='"Liberation Sans", sans-serif' font-size="8.7" fill="#ffffff" font-weight="bold" font-style="normal" >CAD</text>
<path d="M67 11.3H81.5L87 16.8V26.5H67z" fill="#dcdcdc"/><path d="M81.5 11.3V16.8H87z" fill="#f6f6f6"/>
<path d="M97 26.5V10.8H103.5L105 12.8H112.5V16H101z" fill="#cfcfcf"/><path d="M101.3 16.6H116.9L112.6 26.9H97z" fill="#dcdcdc"/>
<path d="M127 9H147V29.4H129.5L127 26.9z" fill="#a3a3a3"/>
<rect x="131.2" y="9" width="11.8" height="8.2" fill="#f0f0f0" />
<rect x="131.6" y="23.5" width="11" height="5.9" fill="#f4f4f4" />
<rect x="133" y="24.6" width="1.6" height="3.6" fill="#555" />
<path d="M157 9H174V26.6H159.2L157 24.5z" fill="#a3a3a3"/>
<rect x="160.2" y="9" width="10.6" height="6.6" fill="#f0f0f0" />
<rect x="160.5" y="21.8" width="9" height="4.8" fill="#f4f4f4" />
<rect x="161.5" y="22.8" width="1.4" height="2.8" fill="#555" />
<path d="M168 28.6L169.2 25.2L174.6 19.6L177 22L171.5 27.6z" fill="#e9b45a"/><path d="M174.6 19.6L175.6 18.6Q176.6 18 177.5 19L178 19.6Q178.4 20.5 177.8 21.2L177 22z" fill="#e2555a"/><path d="M168 28.6L169.2 25.2L171.5 27.6z" fill="#d8d0c0"/>
<rect x="187.8" y="9.3" width="11.6" height="18.4" rx="1.5" fill="#bdbdbd"/>
<rect x="188.8" y="10.8" width="9.6" height="14.2" fill="#666" />
<path d="M196 27.3V20H199.5L200.5 21.2H204V22.8z" fill="#d9a441"/><path d="M197.8 23H205.7L203.7 27.6H196z" fill="#f5c862"/>
<rect x="223" y="9.3" width="11.6" height="18.4" rx="1.5" fill="#bdbdbd"/>
<rect x="224" y="10.8" width="9.6" height="14.2" fill="#666" />
<path d="M218.8 15.3H225V12.6L230.6 16.3L225 20V17.3H218.8z" fill="#52b4f7"/>
<rect x="250.6" y="9" width="12.6" height="6" fill="#f4f4f4" />
<path d="M246.8 14.5Q246.8 13.6 247.8 13.6H266Q267 13.6 267 14.5V25.6H246.8z" fill="#dcdcdc"/>
<rect x="250.6" y="22" width="12.6" height="7.4" fill="#f4f4f4" />
<rect x="251.8" y="23.6" width="10.2" height="4.6" fill="#7ec3f7" />
<path d="M277.3 18.8L286.5 13V16.6Q295.5 16.4 297.1 23.6Q292.5 20.2 286.5 21V24.8z" fill="#dcdcdc"/>
<path d="M305.9 17.1h6.4l-3.2 3.8z" fill="#dcdcdc"/>
<path d="M341.5 18.8L332.3 13V16.6Q323.3 16.4 321.9 23.6Q326.3 20.2 332.3 21V24.8z" fill="#6a707c"/>
<path d="M350.9 17.1h6.4l-3.2 3.8z" fill="#8a8f99"/>
<rect x="367" y="14" width="10" height="1.8" fill="#dcdcdc" />
<path d="M367.0 17.5h10l-5.0 5.4z" fill="#dcdcdc"/>
<path d="M387.3 19L407.1 9.8L404.6 26.9L398.5 22.6L395.6 26.6L394.8 21.6z" fill="#5ab9ff"/><path d="M394.8 21.6L405.6 11.4L398.5 22.6" fill="#2f8fd6"/>
<path d="M1194.8 14.4L1200 19.1L1194.8 23.8z" fill="#dcdcdc"/>
<line x1="1448.3" y1="21.2" x2="1454.6" y2="27.4" stroke="#d8a36a" stroke-width="1.8"/><circle cx="1443.9" cy="16.7" r="5.6" fill="#3a3f4a" stroke="#e4e4e4" stroke-width="1.6"/>
<circle cx="1475.8" cy="14.3" r="5.6" fill="#6cbcf5"/><path d="M1465.8 27.8Q1466 21.5 1472 20.6Q1475.8 23.2 1479.6 20.6Q1486 21.5 1486.3 27.8z" fill="#6cbcf5"/>
<path d="M1598.9 17.0h6.2l-3.1 3.7z" fill="#dcdcdc"/>
<path d="M1619.8 11L1622.4 11.6L1625.6 22.6H1633.6" fill="none" stroke="#b5b5b5" stroke-width="1.4"/><path d="M1623.2 13.6H1636L1634.2 20.4H1625.2z" fill="#a8a8a8"/><circle cx="1626.4" cy="25.4" r="1.6" fill="#b5b5b5"/><circle cx="1632.6" cy="25.4" r="1.6" fill="#b5b5b5"/>
<path d="M1657.6 11.5L1650.4 24.6H1664.8z" fill="none" stroke="#dcdcdc" stroke-width="2.2" stroke-linejoin="round"/><circle cx="1657.6" cy="11.3" r="2.5" fill="#dcdcdc"/><circle cx="1650.3" cy="24.7" r="2.5" fill="#dcdcdc"/><circle cx="1664.9" cy="24.7" r="2.5" fill="#dcdcdc"/>
<path d="M1675.3 17.0h6.2l-3.1 3.7z" fill="#dcdcdc"/>
<rect x="1693.8" y="7.8" width="1" height="22" fill="#3a4a63" />
<circle cx="1715.8" cy="19" r="10" fill="#dcdcdc"/>
<text x="1711.6" y="24.6"  font-family='"Liberation Sans", sans-serif' font-size="15.5" fill="#555" font-weight="normal" font-style="normal" >?</text>
<path d="M1735.9 17.0h6.2l-3.1 3.7z" fill="#dcdcdc"/>
<rect x="1832" y="21" width="10.2" height="3.2" fill="#dcdcdc" />
<rect x="1861.6" y="10.6" width="14" height="13" fill="none" stroke="#dcdcdc" stroke-width="1.2"/>
<rect x="1861" y="10" width="15.2" height="2.6" fill="#dcdcdc" />
<path d="M1892 11.2L1905 24M1905 11.2L1892 24" stroke="#dcdcdc" stroke-width="1.6" fill="none"/>
<rect x="954.6" y="49" width="19" height="8.6" fill="#f0f0f0"/>
<path d="M961.5 55L964.2 51.6L967 55z" fill="#444"/>
<path d="M979.0 51.6h5.6l-2.8 3.4z" fill="#dcdcdc"/>
<text x="413.0" y="25.0" textLength="36.0" lengthAdjust="spacingAndGlyphs" font-family='"Liberation Sans", sans-serif' font-size="15.5" fill="#62bdff" font-weight="normal" font-style="normal" >Share</text>
<text x="694.3" y="24.0" textLength="163.0" lengthAdjust="spacingAndGlyphs" font-family='"Liberation Sans", sans-serif' font-size="15.3" fill="#f0f0f0" font-weight="normal" font-style="normal" >Autodesk AutoCAD 2023</text>
<text x="874.0" y="24.0" textLength="78.3" lengthAdjust="spacingAndGlyphs" font-family='"Liberation Sans", sans-serif' font-size="15.3" fill="#f0f0f0" font-weight="normal" font-style="normal" >sólidos.dwg</text>
<rect x="1208" y="6.5" width="223" height="25" fill="#404a5c" />
<text x="1211.6" y="24.0" textLength="150.4" lengthAdjust="spacingAndGlyphs" font-family='"Liberation Sans", sans-serif' font-size="13.5" fill="#b9bec6" font-weight="normal" font-style="italic" >Type a keyword or phrase</text>
<text x="1493.8" y="24.8" textLength="100.7" lengthAdjust="spacingAndGlyphs" font-family='"Liberation Sans", sans-serif' font-size="15.3" fill="#f0f0f0" font-weight="normal" font-style="normal" >madalena.s.m...</text>
<text x="21.3" y="58.3" textLength="40.4" lengthAdjust="spacingAndGlyphs" font-family='"Liberation Sans", sans-serif' font-size="15.3" fill="#f0f0f0" font-weight="normal" font-style="normal" >Home</text>
<text x="87.0" y="58.3" textLength="36.0" lengthAdjust="spacingAndGlyphs" font-family='"Liberation Sans", sans-serif' font-size="15.3" fill="#d5d8dc" font-weight="normal" font-style="normal" >Insert</text>
<text x="147.0" y="58.3" textLength="60.7" lengthAdjust="spacingAndGlyphs" font-family='"Liberation Sans", sans-serif' font-size="15.3" fill="#d5d8dc" font-weight="normal" font-style="normal" >Annotate</text>
<text x="233.0" y="58.3" textLength="69.7" lengthAdjust="spacingAndGlyphs" font-family='"Liberation Sans", sans-serif' font-size="15.3" fill="#d5d8dc" font-weight="normal" font-style="normal" >Parametric</text>
<text x="327.0" y="58.3" textLength="31.7" lengthAdjust="spacingAndGlyphs" font-family='"Liberation Sans", sans-serif' font-size="15.3" fill="#d5d8dc" font-weight="normal" font-style="normal" >View</text>
<text x="383.0" y="58.3" textLength="53.7" lengthAdjust="spacingAndGlyphs" font-family='"Liberation Sans", sans-serif' font-size="15.3" fill="#d5d8dc" font-weight="normal" font-style="normal" >Manage</text>
<text x="461.0" y="58.3" textLength="45.7" lengthAdjust="spacingAndGlyphs" font-family='"Liberation Sans", sans-serif' font-size="15.3" fill="#d5d8dc" font-weight="normal" font-style="normal" >Output</text>
<text x="531.0" y="58.3" textLength="51.7" lengthAdjust="spacingAndGlyphs" font-family='"Liberation Sans", sans-serif' font-size="15.3" fill="#d5d8dc" font-weight="normal" font-style="normal" >Add-ins</text>
<text x="607.0" y="58.3" textLength="77.7" lengthAdjust="spacingAndGlyphs" font-family='"Liberation Sans", sans-serif' font-size="15.3" fill="#d5d8dc" font-weight="normal" font-style="normal" >Collaborate</text>
<text x="709.3" y="58.3" textLength="87.7" lengthAdjust="spacingAndGlyphs" font-family='"Liberation Sans", sans-serif' font-size="15.3" fill="#d5d8dc" font-weight="normal" font-style="normal" >Express Tools</text>
<text x="821.0" y="58.3" textLength="95.7" lengthAdjust="spacingAndGlyphs" font-family='"Liberation Sans", sans-serif' font-size="15.3" fill="#d5d8dc" font-weight="normal" font-style="normal" >Featured Apps</text>
<rect x="284.1" y="67" width="1" height="120" fill="#262c36" />
<rect x="599.8" y="67" width="1" height="120" fill="#262c36" />
<rect x="783.8" y="67" width="1" height="120" fill="#262c36" />
<rect x="1124.9" y="67" width="1" height="120" fill="#262c36" />
<rect x="1225.1" y="67" width="1" height="120" fill="#262c36" />
<rect x="1502.2" y="67" width="1" height="120" fill="#262c36" />
<rect x="1586.9" y="67" width="1" height="120" fill="#262c36" />
<rect x="1708.0" y="67" width="1" height="120" fill="#262c36" />
<rect x="1821.0" y="67" width="1" height="120" fill="#262c36" />
<text x="20.0" y="132.7" textLength="26.3" lengthAdjust="spacingAndGlyphs" font-family='"Liberation Sans", sans-serif' font-size="15.3" fill="#f0f0f0" font-weight="normal" font-style="normal" >Line</text>
<text x="61.3" y="132.7" textLength="50.4" lengthAdjust="spacingAndGlyphs" font-family='"Liberation Sans", sans-serif' font-size="15.3" fill="#f0f0f0" font-weight="normal" font-style="normal" >Polyline</text>
<text x="130.3" y="133.7" textLength="36.0" lengthAdjust="spacingAndGlyphs" font-family='"Liberation Sans", sans-serif' font-size="15.3" fill="#f0f0f0" font-weight="normal" font-style="normal" >Circle</text>
<text x="194.3" y="133.7" textLength="21.4" lengthAdjust="spacingAndGlyphs" font-family='"Liberation Sans", sans-serif' font-size="15.3" fill="#f0f0f0" font-weight="normal" font-style="normal" >Arc</text>
<text x="318.3" y="91.0" textLength="36.0" lengthAdjust="spacingAndGlyphs" font-family='"Liberation Sans", sans-serif' font-size="15.3" fill="#f0f0f0" font-weight="normal" font-style="normal" >Move</text>
<text x="319.0" y="122.0" textLength="33.3" lengthAdjust="spacingAndGlyphs" font-family='"Liberation Sans", sans-serif' font-size="15.3" fill="#f0f0f0" font-weight="normal" font-style="normal" >Copy</text>
<text x="319.0" y="153.0" textLength="45.3" lengthAdjust="spacingAndGlyphs" font-family='"Liberation Sans", sans-serif' font-size="15.3" fill="#f0f0f0" font-weight="normal" font-style="normal" >Stretch</text>
<text x="410.3" y="91.0" textLength="43.0" lengthAdjust="spacingAndGlyphs" font-family='"Liberation Sans", sans-serif' font-size="15.3" fill="#f0f0f0" font-weight="normal" font-style="normal" >Rotate</text>
<text x="409.3" y="122.0" textLength="40.4" lengthAdjust="spacingAndGlyphs" font-family='"Liberation Sans", sans-serif' font-size="15.3" fill="#f0f0f0" font-weight="normal" font-style="normal" >Mirror</text>
<text x="409.3" y="153.0" textLength="34.0" lengthAdjust="spacingAndGlyphs" font-family='"Liberation Sans", sans-serif' font-size="15.3" fill="#f0f0f0" font-weight="normal" font-style="normal" >Scale</text>
<text x="497.0" y="91.0" textLength="28.3" lengthAdjust="spacingAndGlyphs" font-family='"Liberation Sans", sans-serif' font-size="15.3" fill="#f0f0f0" font-weight="normal" font-style="normal" >Trim</text>
<text x="498.0" y="122.0" textLength="31.3" lengthAdjust="spacingAndGlyphs" font-family='"Liberation Sans", sans-serif' font-size="15.3" fill="#f0f0f0" font-weight="normal" font-style="normal" >Fillet</text>
<text x="497.0" y="153.0" textLength="34.3" lengthAdjust="spacingAndGlyphs" font-family='"Liberation Sans", sans-serif' font-size="15.3" fill="#f0f0f0" font-weight="normal" font-style="normal" >Array</text>
<text x="120.7" y="183.0" textLength="34.0" lengthAdjust="spacingAndGlyphs" font-family='"Liberation Sans", sans-serif' font-size="15.3" fill="#f0f0f0" font-weight="normal" font-style="normal" >Draw</text>
<text x="410.3" y="183.0" textLength="46.0" lengthAdjust="spacingAndGlyphs" font-family='"Liberation Sans", sans-serif' font-size="15.3" fill="#f0f0f0" font-weight="normal" font-style="normal" >Modify</text>
<text x="618.0" y="133.7" textLength="25.7" lengthAdjust="spacingAndGlyphs" font-family='"Liberation Sans", sans-serif' font-size="15.3" fill="#f0f0f0" font-weight="normal" font-style="normal" >Text</text>
<text x="660.7" y="132.7" textLength="70.0" lengthAdjust="spacingAndGlyphs" font-family='"Liberation Sans", sans-serif' font-size="15.3" fill="#f0f0f0" font-weight="normal" font-style="normal" >Dimension</text>
<text x="806.3" y="132.7" textLength="34.4" lengthAdjust="spacingAndGlyphs" font-family='"Liberation Sans", sans-serif' font-size="15.3" fill="#f0f0f0" font-weight="normal" font-style="normal" >Layer</text>
<text x="790.3" y="153.0" textLength="66.4" lengthAdjust="spacingAndGlyphs" font-family='"Liberation Sans", sans-serif' font-size="15.3" fill="#f0f0f0" font-weight="normal" font-style="normal" >Properties</text>
<text x="965.3" y="91.0" textLength="80.0" lengthAdjust="spacingAndGlyphs" font-family='"Liberation Sans", sans-serif' font-size="15.3" fill="#f0f0f0" font-weight="normal" font-style="normal" >dodecaedro</text>
<text x="646.3" y="183.0" textLength="73.4" lengthAdjust="spacingAndGlyphs" font-family='"Liberation Sans", sans-serif' font-size="15.3" fill="#f0f0f0" font-weight="normal" font-style="normal" >Annotation</text>
<text x="926.3" y="183.0" textLength="40.4" lengthAdjust="spacingAndGlyphs" font-family='"Liberation Sans", sans-serif' font-size="15.3" fill="#f0f0f0" font-weight="normal" font-style="normal" >Layers</text>
<text x="1134.0" y="131.7" textLength="35.3" lengthAdjust="spacingAndGlyphs" font-family='"Liberation Sans", sans-serif' font-size="15.3" fill="#f0f0f0" font-weight="normal" font-style="normal" >Insert</text>
<text x="1148.3" y="183.0" textLength="35.7" lengthAdjust="spacingAndGlyphs" font-family='"Liberation Sans", sans-serif' font-size="15.3" fill="#f0f0f0" font-weight="normal" font-style="normal" >Block</text>
<text x="1244.5" y="133.0" textLength="40.4" lengthAdjust="spacingAndGlyphs" font-family='"Liberation Sans", sans-serif' font-size="15.3" fill="#f0f0f0" font-weight="normal" font-style="normal" >Match</text>
<text x="1231.6" y="153.0" textLength="66.4" lengthAdjust="spacingAndGlyphs" font-family='"Liberation Sans", sans-serif' font-size="15.3" fill="#f0f0f0" font-weight="normal" font-style="normal" >Properties</text>
<text x="1362.8" y="90.7" textLength="49.9" lengthAdjust="spacingAndGlyphs" font-family='"Liberation Sans", sans-serif' font-size="15.3" fill="#f0f0f0" font-weight="normal" font-style="normal" >ByLayer</text>
<text x="1419.5" y="121.7" textLength="50.5" lengthAdjust="spacingAndGlyphs" font-family='"Liberation Sans", sans-serif' font-size="15.3" fill="#f0f0f0" font-weight="normal" font-style="normal" >ByLayer</text>
<text x="1419.5" y="153.0" textLength="50.5" lengthAdjust="spacingAndGlyphs" font-family='"Liberation Sans", sans-serif' font-size="15.3" fill="#f0f0f0" font-weight="normal" font-style="normal" >ByLayer</text>
<text x="1508.5" y="133.0" textLength="40.1" lengthAdjust="spacingAndGlyphs" font-family='"Liberation Sans", sans-serif' font-size="15.3" fill="#f0f0f0" font-weight="normal" font-style="normal" >Group</text>
<text x="1604.6" y="134.0" textLength="55.0" lengthAdjust="spacingAndGlyphs" font-family='"Liberation Sans", sans-serif' font-size="15.3" fill="#f0f0f0" font-weight="normal" font-style="normal" >Measure</text>
<text x="1725.6" y="135.0" textLength="33.0" lengthAdjust="spacingAndGlyphs" font-family='"Liberation Sans", sans-serif' font-size="15.3" fill="#f0f0f0" font-weight="normal" font-style="normal" >Paste</text>
<text x="1847.1" y="134.0" textLength="29.6" lengthAdjust="spacingAndGlyphs" font-family='"Liberation Sans", sans-serif' font-size="15.3" fill="#f0f0f0" font-weight="normal" font-style="normal" >Base</text>
<text x="1313.2" y="183.0" textLength="66.7" lengthAdjust="spacingAndGlyphs" font-family='"Liberation Sans", sans-serif' font-size="15.3" fill="#f0f0f0" font-weight="normal" font-style="normal" >Properties</text>
<text x="1513.5" y="183.0" textLength="46.5" lengthAdjust="spacingAndGlyphs" font-family='"Liberation Sans", sans-serif' font-size="15.3" fill="#f0f0f0" font-weight="normal" font-style="normal" >Groups</text>
<text x="1614.4" y="183.0" textLength="49.3" lengthAdjust="spacingAndGlyphs" font-family='"Liberation Sans", sans-serif' font-size="15.3" fill="#f0f0f0" font-weight="normal" font-style="normal" >Utilities</text>
<text x="1732.2" y="183.0" textLength="65.1" lengthAdjust="spacingAndGlyphs" font-family='"Liberation Sans", sans-serif' font-size="15.3" fill="#f0f0f0" font-weight="normal" font-style="normal" >Clipboard</text>
<text x="1828.5" y="183.0" textLength="31.2" lengthAdjust="spacingAndGlyphs" font-family='"Liberation Sans", sans-serif' font-size="15.3" fill="#f0f0f0" font-weight="normal" font-style="normal" >View</text>
<path d="M77.5 222L89.4 192H189.7L178.2 222z" fill="#3b4453"/>
<path d="M18.3 216.9L26.8 197.5M230 216.9L237.8 197.5" stroke="#4a5262" stroke-width="1.2" fill="none"/>
<text x="37.3" y="212.8" textLength="30.5" lengthAdjust="spacingAndGlyphs" font-family='"Liberation Sans", sans-serif' font-size="15.3" fill="#f0f0f0" font-weight="normal" font-style="normal" >Start</text>
<text x="98.5" y="212.8" textLength="55.3" lengthAdjust="spacingAndGlyphs" font-family='"Liberation Sans", sans-serif' font-size="15.3" fill="#f0f0f0" font-weight="bold" font-style="normal" >sólidos*</text>
<path d="M165.4 202.6L174.6 211.8M174.6 202.6L165.4 211.8" stroke="#b4b9c2" stroke-width="2" fill="none"/>
<path d="M201.5 207.1H216.5M209 199.6V214.6" stroke="#f0f0f0" stroke-width="2.2" fill="none"/>
<text x="10.8" y="246.3" textLength="162.6" lengthAdjust="spacingAndGlyphs" font-family='"Liberation Sans", sans-serif' font-size="14.3" fill="#e6e6e6" font-weight="normal" font-style="normal" >[−][Custom View][X-Ray]</text>
<defs>
<clipPath id="cFC"><polygon points="807.7,476.6 976.3,462.0 1040.4,619.2 912.6,730.5 769.7,643.4"/></clipPath>
<clipPath id="cFT"><polygon points="807.7,476.6 727.5,406.2 844.9,347.7 998.5,382.6 976.3,462.0"/></clipPath>
<clipPath id="cFR"><polygon points="976.3,462.0 998.5,382.6 1077.8,490.2 1103.6,636.3 1040.4,619.2"/></clipPath>
<clipPath id="cFBR"><polygon points="1040.4,619.2 1103.6,636.3 1015.4,758.5 897.0,817.2 912.6,730.5"/></clipPath>
<clipPath id="cFBL"><polygon points="912.6,730.5 897.0,817.2 742.8,782.3 663.7,674.1 769.7,643.4"/></clipPath>
<clipPath id="cFL"><polygon points="769.7,643.4 663.7,674.1 638.6,527.6 727.5,406.2 807.7,476.6"/></clipPath>
</defs>
<g shape-rendering="crispEdges">
<g clip-path="url(#cFC)">
<polygon points="807.7,476.6 976.3,462.0 1040.4,619.2 912.6,730.5 769.7,643.4" fill="rgb(9,143,144)"/>
<polygon points="829.2,434.2 972.6,521.5 934.5,688.3 765.8,702.7 701.5,545.3" fill="rgb(9,143,144)" stroke="rgb(9,143,144)" stroke-width="0.6"/>
<polygon points="829.2,434.2 844.9,347.7 998.5,382.6 1077.8,490.2 972.6,521.5" fill="rgb(9,118,119)" stroke="rgb(9,118,119)" stroke-width="0.6"/>
<polygon points="972.6,521.5 1077.8,490.2 1103.6,636.3 1015.4,758.5 934.5,688.3" fill="rgb(9,146,147)" stroke="rgb(9,146,147)" stroke-width="0.6"/>
<polygon points="934.5,688.3 1015.4,758.5 897.0,817.2 742.8,782.3 765.8,702.7" fill="rgb(9,134,135)" stroke="rgb(9,134,135)" stroke-width="0.6"/>
<polygon points="765.8,702.7 742.8,782.3 663.7,674.1 638.6,527.6 701.5,545.3" fill="rgb(9,128,129)" stroke="rgb(9,128,129)" stroke-width="0.6"/>
<polygon points="701.5,545.3 638.6,527.6 727.5,406.2 844.9,347.7 829.2,434.2" fill="rgb(9,133,134)" stroke="rgb(9,133,134)" stroke-width="0.6"/>
</g>
<g clip-path="url(#cFT)">
<polygon points="807.7,476.6 727.5,406.2 844.9,347.7 998.5,382.6 976.3,462.0" fill="rgb(9,132,133)"/>
<polygon points="829.2,434.2 972.6,521.5 934.5,688.3 765.8,702.7 701.5,545.3" fill="rgb(9,136,137)" stroke="rgb(9,136,137)" stroke-width="0.6"/>
<polygon points="829.2,434.2 844.9,347.7 998.5,382.6 1077.8,490.2 972.6,521.5" fill="rgb(9,112,113)" stroke="rgb(9,112,113)" stroke-width="0.6"/>
<polygon points="972.6,521.5 1077.8,490.2 1103.6,636.3 1015.4,758.5 934.5,688.3" fill="rgb(9,130,131)" stroke="rgb(9,130,131)" stroke-width="0.6"/>
<polygon points="934.5,688.3 1015.4,758.5 897.0,817.2 742.8,782.3 765.8,702.7" fill="rgb(9,120,121)" stroke="rgb(9,120,121)" stroke-width="0.6"/>
<polygon points="765.8,702.7 742.8,782.3 663.7,674.1 638.6,527.6 701.5,545.3" fill="rgb(9,117,118)" stroke="rgb(9,117,118)" stroke-width="0.6"/>
<polygon points="701.5,545.3 638.6,527.6 727.5,406.2 844.9,347.7 829.2,434.2" fill="rgb(9,126,127)" stroke="rgb(9,126,127)" stroke-width="0.6"/>
</g>
<g clip-path="url(#cFR)">
<polygon points="976.3,462.0 998.5,382.6 1077.8,490.2 1103.6,636.3 1040.4,619.2" fill="rgb(9,117,118)"/>
<polygon points="829.2,434.2 972.6,521.5 934.5,688.3 765.8,702.7 701.5,545.3" fill="rgb(9,117,118)" stroke="rgb(9,117,118)" stroke-width="0.6"/>
<polygon points="829.2,434.2 844.9,347.7 998.5,382.6 1077.8,490.2 972.6,521.5" fill="rgb(9,91,92)" stroke="rgb(9,91,92)" stroke-width="0.6"/>
<polygon points="972.6,521.5 1077.8,490.2 1103.6,636.3 1015.4,758.5 934.5,688.3" fill="rgb(9,118,119)" stroke="rgb(9,118,119)" stroke-width="0.6"/>
<polygon points="934.5,688.3 1015.4,758.5 897.0,817.2 742.8,782.3 765.8,702.7" fill="rgb(9,105,106)" stroke="rgb(9,105,106)" stroke-width="0.6"/>
<polygon points="765.8,702.7 742.8,782.3 663.7,674.1 638.6,527.6 701.5,545.3" fill="rgb(9,102,103)" stroke="rgb(9,102,103)" stroke-width="0.6"/>
<polygon points="701.5,545.3 638.6,527.6 727.5,406.2 844.9,347.7 829.2,434.2" fill="rgb(9,107,108)" stroke="rgb(9,107,108)" stroke-width="0.6"/>
</g>
<g clip-path="url(#cFBR)">
<polygon points="1040.4,619.2 1103.6,636.3 1015.4,758.5 897.0,817.2 912.6,730.5" fill="rgb(9,136,137)"/>
<polygon points="829.2,434.2 972.6,521.5 934.5,688.3 765.8,702.7 701.5,545.3" fill="rgb(9,136,137)" stroke="rgb(9,136,137)" stroke-width="0.6"/>
<polygon points="829.2,434.2 844.9,347.7 998.5,382.6 1077.8,490.2 972.6,521.5" fill="rgb(9,113,114)" stroke="rgb(9,113,114)" stroke-width="0.6"/>
<polygon points="972.6,521.5 1077.8,490.2 1103.6,636.3 1015.4,758.5 934.5,688.3" fill="rgb(9,123,124)" stroke="rgb(9,123,124)" stroke-width="0.6"/>
<polygon points="934.5,688.3 1015.4,758.5 897.0,817.2 742.8,782.3 765.8,702.7" fill="rgb(9,116,117)" stroke="rgb(9,116,117)" stroke-width="0.6"/>
<polygon points="765.8,702.7 742.8,782.3 663.7,674.1 638.6,527.6 701.5,545.3" fill="rgb(9,121,122)" stroke="rgb(9,121,122)" stroke-width="0.6"/>
<polygon points="701.5,545.3 638.6,527.6 727.5,406.2 844.9,347.7 829.2,434.2" fill="rgb(9,126,127)" stroke="rgb(9,126,127)" stroke-width="0.6"/>
</g>
<g clip-path="url(#cFBL)">
<polygon points="912.6,730.5 897.0,817.2 742.8,782.3 663.7,674.1 769.7,643.4" fill="rgb(9,93,94)"/>
<polygon points="829.2,434.2 972.6,521.5 934.5,688.3 765.8,702.7 701.5,545.3" fill="rgb(9,95,96)" stroke="rgb(9,95,96)" stroke-width="0.6"/>
<polygon points="829.2,434.2 844.9,347.7 998.5,382.6 1077.8,490.2 972.6,521.5" fill="rgb(9,70,71)" stroke="rgb(9,70,71)" stroke-width="0.6"/>
<polygon points="972.6,521.5 1077.8,490.2 1103.6,636.3 1015.4,758.5 934.5,688.3" fill="rgb(9,91,92)" stroke="rgb(9,91,92)" stroke-width="0.6"/>
<polygon points="934.5,688.3 1015.4,758.5 897.0,817.2 742.8,782.3 765.8,702.7" fill="rgb(9,93,94)" stroke="rgb(9,93,94)" stroke-width="0.6"/>
<polygon points="765.8,702.7 742.8,782.3 663.7,674.1 638.6,527.6 701.5,545.3" fill="rgb(9,83,84)" stroke="rgb(9,83,84)" stroke-width="0.6"/>
<polygon points="701.5,545.3 638.6,527.6 727.5,406.2 844.9,347.7 829.2,434.2" fill="rgb(9,83,84)" stroke="rgb(9,83,84)" stroke-width="0.6"/>
</g>
<g clip-path="url(#cFL)">
<polygon points="769.7,643.4 663.7,674.1 638.6,527.6 727.5,406.2 807.7,476.6" fill="rgb(9,150,151)"/>
<polygon points="829.2,434.2 972.6,521.5 934.5,688.3 765.8,702.7 701.5,545.3" fill="rgb(9,150,151)" stroke="rgb(9,150,151)" stroke-width="0.6"/>
<polygon points="829.2,434.2 844.9,347.7 998.5,382.6 1077.8,490.2 972.6,521.5" fill="rgb(9,127,128)" stroke="rgb(9,127,128)" stroke-width="0.6"/>
<polygon points="972.6,521.5 1077.8,490.2 1103.6,636.3 1015.4,758.5 934.5,688.3" fill="rgb(9,148,149)" stroke="rgb(9,148,149)" stroke-width="0.6"/>
<polygon points="934.5,688.3 1015.4,758.5 897.0,817.2 742.8,782.3 765.8,702.7" fill="rgb(9,138,139)" stroke="rgb(9,138,139)" stroke-width="0.6"/>
<polygon points="765.8,702.7 742.8,782.3 663.7,674.1 638.6,527.6 701.5,545.3" fill="rgb(9,130,131)" stroke="rgb(9,130,131)" stroke-width="0.6"/>
<polygon points="701.5,545.3 638.6,527.6 727.5,406.2 844.9,347.7 829.2,434.2" fill="rgb(9,138,139)" stroke="rgb(9,138,139)" stroke-width="0.6"/>
</g>
</g>
<line x1="829.2" y1="434.2" x2="972.6" y2="521.5" stroke="#9aeae4" stroke-width="1" stroke-opacity="0.7"/>
<line x1="972.6" y1="521.5" x2="934.5" y2="688.3" stroke="#9aeae4" stroke-width="1" stroke-opacity="0.7"/>
<line x1="934.5" y1="688.3" x2="765.8" y2="702.7" stroke="#9aeae4" stroke-width="1" stroke-opacity="0.7"/>
<line x1="765.8" y1="702.7" x2="701.5" y2="545.3" stroke="#9aeae4" stroke-width="1" stroke-opacity="0.7"/>
<line x1="701.5" y1="545.3" x2="829.2" y2="434.2" stroke="#9aeae4" stroke-width="1" stroke-opacity="0.7"/>
<line x1="829.2" y1="434.2" x2="844.9" y2="347.7" stroke="#9aeae4" stroke-width="1" stroke-opacity="0.7"/>
<line x1="972.6" y1="521.5" x2="1077.8" y2="490.2" stroke="#9aeae4" stroke-width="1" stroke-opacity="0.7"/>
<line x1="934.5" y1="688.3" x2="1015.4" y2="758.5" stroke="#9aeae4" stroke-width="1" stroke-opacity="0.7"/>
<line x1="765.8" y1="702.7" x2="742.8" y2="782.3" stroke="#9aeae4" stroke-width="1" stroke-opacity="0.7"/>
<line x1="701.5" y1="545.3" x2="638.6" y2="527.6" stroke="#9aeae4" stroke-width="1" stroke-opacity="0.7"/>
<g shape-rendering="crispEdges">
<line x1="807.7" y1="476.6" x2="976.3" y2="462.0" stroke="#ffffff" stroke-width="1" stroke-opacity="0.95"/>
<line x1="976.3" y1="462.0" x2="1040.4" y2="619.2" stroke="#ffffff" stroke-width="1" stroke-opacity="0.95"/>
<line x1="1040.4" y1="619.2" x2="912.6" y2="730.5" stroke="#ffffff" stroke-width="1" stroke-opacity="0.95"/>
<line x1="912.6" y1="730.5" x2="769.7" y2="643.4" stroke="#ffffff" stroke-width="1" stroke-opacity="0.95"/>
<line x1="769.7" y1="643.4" x2="807.7" y2="476.6" stroke="#ffffff" stroke-width="1" stroke-opacity="0.95"/>
<line x1="807.7" y1="476.6" x2="727.5" y2="406.2" stroke="#ffffff" stroke-width="1" stroke-opacity="0.95"/>
<line x1="976.3" y1="462.0" x2="998.5" y2="382.6" stroke="#ffffff" stroke-width="1" stroke-opacity="0.95"/>
<line x1="1040.4" y1="619.2" x2="1103.6" y2="636.3" stroke="#ffffff" stroke-width="1" stroke-opacity="0.95"/>
<line x1="912.6" y1="730.5" x2="897.0" y2="817.2" stroke="#ffffff" stroke-width="1" stroke-opacity="0.95"/>
<line x1="769.7" y1="643.4" x2="663.7" y2="674.1" stroke="#ffffff" stroke-width="1" stroke-opacity="0.95"/>
<polygon points="844.9,347.7 998.5,382.6 1077.8,490.2 1103.6,636.3 1015.4,758.5 897.0,817.2 742.8,782.3 663.7,674.1 638.6,527.6 727.5,406.2" fill="none" stroke="#ffffff" stroke-width="1" stroke-opacity="1"/>
</g>
<defs><linearGradient id="gz" x1="0" x2="1" y1="0" y2="0"><stop offset="0" stop-color="#3f62a8"/><stop offset="0.55" stop-color="#5f86cf"/><stop offset="1" stop-color="#3a5a9c"/></linearGradient><linearGradient id="gx" x1="0" x2="0" y1="0" y2="1"><stop offset="0" stop-color="#f0a3a0"/><stop offset="0.6" stop-color="#d97f7f"/><stop offset="1" stop-color="#a85c5c"/></linearGradient></defs>
<line x1="747" y1="778" x2="769" y2="758" stroke="#3b7a33" stroke-width="6.5" stroke-linecap="round"/>
<path d="M739.5 783.5V731.5Q739.5 729 743 728.5Q746.6 729 746.6 731.5V783.5Q743 785 739.5 783.5z" fill="url(#gz)"/>
<g transform="translate(743,783.2) rotate(12.9)"><rect x="0" y="-3" width="56" height="6.4" rx="3" fill="url(#gx)"/></g>
<path d="M740 709.8H755.6L740.3 724.8H755.6" fill="none" stroke="#1c7dff" stroke-width="1.1"/>
<path d="M766.4 736.4L773.5 744L780.8 736.8M773.5 744V750.6" fill="none" stroke="#22a822" stroke-width="1.1"/>
<path d="M793.8 775.2L809 790M809 775.2L793.8 790" fill="none" stroke="#b23a3a" stroke-width="1.1"/>
<rect x="1838.8" y="245" width="13.5" height="4" fill="#ececec" stroke="#1a1e26" stroke-width="0.8"/>
<rect x="1867.1" y="236.9" width="10" height="10" fill="#ececec" stroke="#1a1e26" stroke-width="0.8"/>
<rect x="1864" y="240" width="10.2" height="10" fill="#ececec" stroke="#1a1e26" stroke-width="0.8"/>
<rect x="1867.2" y="242.4" width="4.7" height="4.5" fill="#1c212a" />
<path d="M1889.6 239.2L1900.2 247.8M1900.2 239.2L1889.6 247.8" stroke="#ececec" stroke-width="3.2" fill="none"/>
<rect x="1888.6" y="238.1" width="2.6" height="1.6" fill="#ececec" />
<rect x="1898.6" y="238.1" width="2.6" height="1.6" fill="#ececec" />
<rect x="1888.6" y="247.3" width="2.6" height="1.6" fill="#ececec" />
<rect x="1898.6" y="247.3" width="2.6" height="1.6" fill="#ececec" />
<g transform="rotate(2 1817.1 388.3)"><path fill-rule="evenodd" fill="#454c58" d="M1742.1 388.3a75 38 0 1 0 150 0a75 38 0 1 0 -150 0zM1757.6 390.3a59.5 25.5 0 1 0 119 0a59.5 25.5 0 1 0 -119 0z"/></g>
<defs><radialGradient id="vsh"><stop offset="0" stop-color="#0d1016" stop-opacity="0.9"/><stop offset="1" stop-color="#0d1016" stop-opacity="0"/></radialGradient><linearGradient id="vr" x1="0" y1="0" x2="0.4" y2="1"><stop offset="0" stop-color="#a6aab0"/><stop offset="1" stop-color="#7e828a"/></linearGradient><linearGradient id="vf" x1="0" y1="0" x2="0.3" y2="1"><stop offset="0" stop-color="#a9adb3"/><stop offset="1" stop-color="#94989f"/></linearGradient></defs>
<ellipse cx="1816" cy="392" rx="44" ry="17" fill="url(#vsh)"/>
<path d="M1805.1 311.3L1854.3 320.3L1832.4 343.5L1777.7 331.8z" fill="#aeb2b8"/>
<path d="M1777.7 331.8L1832.4 343.5L1830.9 395.3L1779.5 382.3z" fill="url(#vf)"/>
<path d="M1832.4 343.5L1854.3 320.3L1851.9 366.1L1830.9 395.3z" fill="url(#vr)"/>
<path d="M1777.7 331.8L1832.4 343.5L1830.9 395.3M1832.4 343.5L1854.3 320.3" fill="none" stroke="#5a5f6a" stroke-width="0.8" stroke-dasharray="4 2"/>
<path d="M1821.4 341.2L1826.2 336.6L1836.2 338.8L1832.6 343.4L1832.2 352.4L1821.2 350z" fill="#b6bac8"/>
<g transform="matrix(0.547,0.117,0.018,0.505,1777.7,331.8)"><text x="17" y="64" textLength="66" lengthAdjust="spacingAndGlyphs" font-family='"Liberation Sans", sans-serif' font-weight="bold" font-size="36" fill="#4b5162">FRONT</text></g>
<g transform="matrix(0.547,0.117,-0.274,0.205,1805.1,311.3)"><text x="31" y="66" textLength="38" lengthAdjust="spacingAndGlyphs" font-family='"Liberation Sans", sans-serif' font-weight="bold" font-size="38" fill="#4b5162">TOP</text></g>
<g transform="matrix(0.219,-0.232,-0.015,0.518,1832.4,343.5)"><text x="18" y="62" textLength="64" lengthAdjust="spacingAndGlyphs" font-family='"Liberation Sans", sans-serif' font-weight="bold" font-size="30" fill="#4b5162">RIGHT</text></g>
<g transform="translate(1760,363.4) rotate(-16) skewX(-22) scale(1.35,0.85)"><text x="0" y="7" text-anchor="middle" font-family='"Liberation Sans", sans-serif' font-weight="bold" font-size="20" fill="#b6b6b6">W</text></g>
<g transform="translate(1781.8,417.6) rotate(8) skewX(-20) scale(1.35,0.85)"><text x="0" y="7" text-anchor="middle" font-family='"Liberation Sans", sans-serif' font-weight="bold" font-size="20" fill="#b6b6b6">S</text></g>
<g transform="translate(1883.3,396.1) rotate(24) skewX(-22) scale(1.35,0.85)"><text x="0" y="7" text-anchor="middle" font-family='"Liberation Sans", sans-serif' font-weight="bold" font-size="20" fill="#b6b6b6">E</text></g>
<rect x="1788.8" y="454.2" width="55.4" height="19" rx="4.5" fill="#9da0af" stroke="#2c3038" stroke-width="1"/>
<text x="1793.0" y="467.6" textLength="29.0" lengthAdjust="spacingAndGlyphs" font-family='"Liberation Sans", sans-serif' font-size="13.5" fill="#777b89" font-weight="normal" font-style="normal" >WCS</text>
<path d="M1830.2 460.6H1839.4L1834.8 465.8z" fill="none" stroke="#c6c8d2" stroke-width="1"/>
<rect x="1870.4" y="505.2" width="39.6" height="258.2" rx="3.5" fill="#5a5f67" stroke="#3a3f48" stroke-width="0.8"/>
<circle cx="1902.8" cy="511.8" r="3.8" fill="#666c76" stroke="#474c56" stroke-width="0.8"/><path d="M1900.8 509.8L1904.8 513.8M1904.8 509.8L1900.8 513.8" stroke="#474c56" stroke-width="0.9"/>
<circle cx="1902.8" cy="756.2" r="3.8" fill="#666c76" stroke="#474c56" stroke-width="0.8"/><path d="M1900.4 756.4H1905.2L1902.8 759z" fill="#474c56"/>
<path d="M1877 539.5A13.3 13.3 0 0 1 1890.3 526.2H1903.6V539.5A13.3 13.3 0 0 1 1877 539.5z" fill="#565c65" stroke="#474c56" stroke-width="1.4" stroke-linejoin="round" stroke-linecap="round"/>
<circle cx="1890.3" cy="539.5" r="9.6" fill="none" stroke="#474c56" stroke-width="1.3"/><circle cx="1890.3" cy="539.5" r="5.6" fill="#50555e" stroke="#474c56" stroke-width="1.3"/>
<path d="M1884.4 545.6L1882.4 548.2M1896.2 545.6L1898.2 548.2" fill="none" stroke="#474c56" stroke-width="1.2" stroke-linejoin="round" stroke-linecap="round"/>
<path d="M1887.5 563.7h5.6l-2.8 3.4z" fill="#474c56"/>
<rect x="1873" y="573" width="34.6" height="0.8" fill="#535962" />
<path d="M1884.5 598L1877 593.5Q1874.8 591.6 1877 590.6Q1880 590 1883.4 592.6L1884.2 593L1882.8 582Q1883 579.6 1884.8 579.8Q1886.4 580 1886.8 582.4L1888 589.6L1888.2 580Q1888.6 577.8 1890.4 577.8Q1892 578 1892.2 580.2L1892.4 589.4L1893.8 581Q1894.4 579 1896 579.2Q1897.6 579.6 1897.4 581.8L1896.6 590.6L1899.6 585.6Q1900.6 583.8 1902 584.4Q1903.4 585.2 1902.8 587.2L1899.6 597Q1898 604 1893.4 606H1888Q1885.6 603 1884.5 598z" fill="#50555e" stroke="#474c56" stroke-width="1.3" stroke-linejoin="round" stroke-linecap="round"/>
<path d="M1876 613.6L1893.6 631.6M1893.6 613.6L1876 631.6M1876 618V613.6H1880.4M1889.2 613.6H1893.6V618M1876 627.2V631.6H1880.4" fill="none" stroke="#474c56" stroke-width="1.4" stroke-linejoin="round" stroke-linecap="round"/>
<circle cx="1896" cy="634.6" r="5.6" fill="#5a6069" stroke="#474c56" stroke-width="1.4"/><path d="M1900 638.8L1904 643" stroke="#474c56" stroke-width="2.4" stroke-linecap="round"/>
<path d="M1887.5 650.3h5.6l-2.8 3.4z" fill="#474c56"/>
<path d="M1888.4 686.4V668H1885.4L1890.2 661.4L1895 668H1892V686.4z" fill="none" stroke="#474c56" stroke-width="1.3" stroke-linejoin="round" stroke-linecap="round"/>
<path d="M1884 672.6Q1876.4 674.6 1876.4 677.6Q1876.8 682 1888 683.2M1892.4 683.2Q1903.8 682 1904.2 677.6Q1904 674.6 1896.4 672.6" fill="none" stroke="#474c56" stroke-width="1.3" stroke-linejoin="round" stroke-linecap="round"/>
<path d="M1885.6 679.4L1880.4 682.6L1885.6 686.2z" fill="#474c56" stroke="#474c56" stroke-width="1" stroke-linejoin="round" stroke-linecap="round"/>
<path d="M1887.5 697.3h5.6l-2.8 3.4z" fill="#474c56"/>
<rect x="1873" y="703.6" width="34.6" height="0.8" fill="#535962" />
<rect x="1876" y="712.4" width="7.4" height="7" fill="none" stroke="#474c56" stroke-width="1.2"/>
<rect x="1886" y="712.4" width="7.4" height="7" fill="none" stroke="#474c56" stroke-width="1.2"/>
<rect x="1896" y="712.4" width="7.4" height="7" fill="none" stroke="#474c56" stroke-width="1.2"/>
<rect x="1876" y="723.4" width="19.6" height="16.6" fill="none" stroke="#474c56" stroke-width="1.3"/><path d="M1882 726.8L1891 731.8L1882 736.8z" fill="#474c56"/>
<path d="M474 1027.2H405Q402 1027.2 402 1030.2V1057.2Q402 1060.2 405 1060.2H474z" fill="#2a303c"/>
<rect x="407.2" y="1032.6" width="1.5" height="1.5" fill="#d8d8d8" />
<rect x="411.2" y="1032.6" width="1.5" height="1.5" fill="#d8d8d8" />
<rect x="407.2" y="1035.5" width="1.5" height="1.5" fill="#d8d8d8" />
<rect x="411.2" y="1035.5" width="1.5" height="1.5" fill="#d8d8d8" />
<rect x="407.2" y="1038.4" width="1.5" height="1.5" fill="#d8d8d8" />
<rect x="411.2" y="1038.4" width="1.5" height="1.5" fill="#d8d8d8" />
<rect x="407.2" y="1041.3" width="1.5" height="1.5" fill="#d8d8d8" />
<rect x="411.2" y="1041.3" width="1.5" height="1.5" fill="#d8d8d8" />
<rect x="407.2" y="1044.2" width="1.5" height="1.5" fill="#d8d8d8" />
<rect x="411.2" y="1044.2" width="1.5" height="1.5" fill="#d8d8d8" />
<rect x="407.2" y="1047.1" width="1.5" height="1.5" fill="#d8d8d8" />
<rect x="411.2" y="1047.1" width="1.5" height="1.5" fill="#d8d8d8" />
<rect x="407.2" y="1050.0" width="1.5" height="1.5" fill="#d8d8d8" />
<rect x="411.2" y="1050.0" width="1.5" height="1.5" fill="#d8d8d8" />
<rect x="407.2" y="1052.9" width="1.5" height="1.5" fill="#d8d8d8" />
<rect x="411.2" y="1052.9" width="1.5" height="1.5" fill="#d8d8d8" />
<path d="M421.8 1037.2L432.2 1047.6M432.2 1037.2L421.8 1047.6" stroke="#dedede" stroke-width="2" fill="none"/>
<path d="M450.2 1051.2L460.2 1041.2" stroke="#b9b9b9" stroke-width="3.4" stroke-linecap="round"/><path d="M466.6 1036.4A5 5 0 1 1 462.4 1033.4L460.6 1037.2L463 1039.6z" fill="#b9b9b9"/>
<rect x="474" y="1027.8" width="1044" height="32.2" rx="3" fill="#c0c1c3"/>
<rect x="479.4" y="1036.4" width="19" height="14.4" fill="#c9c9cb" stroke="#55585c" stroke-width="1"/>
<rect x="479.4" y="1036.4" width="19" height="3" fill="#55585c" />
<path d="M481.6 1042.2L484.4 1044.2L481.6 1046.2M485.4 1046.6H488.8" stroke="#55585c" stroke-width="0.9" fill="none"/>
<path d="M501.4 1042.4H510.6L506 1047.4z" fill="#55585c"/>
<text x="520" y="1048.9" textLength="124.6" lengthAdjust="spacing" font-family='"Liberation Mono", monospace' font-size="12.6" font-style="italic" fill="#5c5c5e">Type a command</text>
<path d="M1502.6 1047L1507.6 1042L1512.6 1047z" fill="#55585c"/>
<path d="M16.3 1096L28.2 1066H101.9L90.1 1096z" fill="#3b4453"/>
<text x="37.5" y="1086.8" textLength="43.4" lengthAdjust="spacingAndGlyphs" font-family='"Liberation Sans", sans-serif' font-size="15.3" fill="#f0f0f0" font-weight="bold" font-style="normal" >Model</text>
<text x="111.4" y="1086.8" textLength="15.0" lengthAdjust="spacingAndGlyphs" font-family='"Liberation Sans", sans-serif' font-size="15.3" fill="#f0f0f0" font-weight="normal" font-style="normal" >a3</text>
<path d="M138.2 1090.9L146.1 1071.5M188.1 1090.9L195.8 1071.5" stroke="#4a5262" stroke-width="1.2" fill="none"/>
<path d="M159.2 1081.2H174.8M167 1073.6V1088.8" stroke="#f0f0f0" stroke-width="2.2" fill="none"/>
<rect x="8.1" y="1103.2" width="1157.7" height="29.4" fill="#3b4453" />
<rect x="1170.8" y="1103.2" width="59.0" height="29.4" fill="#3b4453" />
<rect x="1233" y="1103.2" width="80.2" height="29.4" fill="#3b4453" />
<rect x="1315.9" y="1103.2" width="30.0" height="29.4" fill="#3b4453" />
<rect x="1347.2" y="1103.2" width="129.6" height="29.4" fill="#3b4453" />
<rect x="1478.5" y="1103.2" width="79.7" height="29.4" fill="#3b4453" />
<rect x="1561.3" y="1103.2" width="131.8" height="29.4" fill="#3b4453" />
<rect x="1696" y="1103.2" width="49.4" height="29.4" fill="#3b4453" />
<rect x="1747" y="1103.2" width="30" height="29.4" fill="#3b4453" />
<rect x="1780" y="1103.2" width="30.6" height="29.4" fill="#3b4453" />
<rect x="1814.1" y="1103.2" width="33.6" height="29.4" fill="#3b4453" />
<rect x="1851.1" y="1103.2" width="59.8" height="29.4" fill="#3b4453" />
<rect x="1377.8" y="1103.6000000000001" width="28.2" height="28.599999999999998" fill="#5b8cc6" />
<rect x="1478.9" y="1103.6000000000001" width="28.1" height="28.599999999999998" fill="#5b8cc6" />
<rect x="1508.7" y="1103.6000000000001" width="28.2" height="28.599999999999998" fill="#5b8cc6" />
<rect x="1561.7" y="1103.6000000000001" width="28.1" height="28.599999999999998" fill="#5b8cc6" />
<text x="1176.3" y="1123.1" textLength="49.4" lengthAdjust="spacingAndGlyphs" font-family='"Liberation Sans", sans-serif' font-size="15.3" fill="#f0f0f0" font-weight="normal" font-style="normal" >MODEL</text>
<path d="M1242.4 1108V1126.6M1247.6 1108V1126.6M1252.8 1108V1126.6M1238.2 1112.2H1257M1238.2 1117.4H1257M1238.2 1122.6H1257" fill="none" stroke="#ececec" stroke-width="1.1"/>
<rect x="1270.2" y="1110.2" width="2.6" height="2.6" fill="#dcdcdc" />
<rect x="1276.2" y="1110.2" width="2.6" height="2.6" fill="#dcdcdc" />
<rect x="1282.2" y="1110.2" width="2.6" height="2.6" fill="#dcdcdc" />
<rect x="1270.2" y="1116.2" width="2.6" height="2.6" fill="#dcdcdc" />
<rect x="1276.2" y="1116.2" width="2.6" height="2.6" fill="#dcdcdc" />
<rect x="1282.2" y="1116.2" width="2.6" height="2.6" fill="#dcdcdc" />
<rect x="1270.2" y="1122.2" width="2.6" height="2.6" fill="#dcdcdc" />
<rect x="1276.2" y="1122.2" width="2.6" height="2.6" fill="#dcdcdc" />
<rect x="1282.2" y="1122.2" width="2.6" height="2.6" fill="#dcdcdc" />
<path d="M1298.0 1114.5h9.6l-4.8 5z" fill="#dcdcdc"/>
<path d="M1321.6 1115H1330M1325.8 1110.8V1119.2" fill="none" stroke="#ececec" stroke-width="1.1"/>
<rect x="1328.6" y="1120.2" width="12" height="4.8" fill="#e4e4e4"/>
<rect x="1329.8" y="1121.4" width="1.2" height="2.4" fill="#555" />
<path d="M1352.6 1108.6V1126.8H1371.6M1352.6 1121.4H1358V1126.8" fill="none" stroke="#ececec" stroke-width="1.2"/>
<circle cx="1390.1" cy="1118.3" r="7.4" fill="none" stroke="#ececec" stroke-width="1.2"/>
<path d="M1390.1 1118.3H1402M1390.1 1118.3L1398.6 1108.6" fill="none" stroke="#ececec" stroke-width="1.2"/>
<path d="M1412.0 1114.5h9.6l-4.8 5z" fill="#dcdcdc"/>
<path d="M1442 1108V1126.4" fill="none" stroke="#3cc04a" stroke-width="1.2"/>
<path d="M1434.2 1109.2L1448.8 1124.8" fill="none" stroke="#d9413f" stroke-width="1.2"/>
<rect x="1440.4" y="1115.3" width="3.2" height="3.2" fill="#3b4453" stroke="#ececec" stroke-width="0.8"/>
<path d="M1462.0 1114.5h9.6l-4.8 5z" fill="#dcdcdc"/>
<path d="M1483 1125.2L1502 1108.6" fill="none" stroke="#ececec" stroke-width="1.3"/>
<path d="M1483 1125.4H1503" fill="none" stroke="#b9cfe8" stroke-width="1.3"/>
<rect x="1488.4" y="1116.4" width="3.4" height="3.4" fill="#ffffff" />
<path d="M1515.6 1110.2H1532V1126.6H1515.6z" fill="none" stroke="#ececec" stroke-width="1.3"/>
<rect x="1512.8" y="1108" width="5" height="5" fill="#5b8cc6" stroke="#ececec" stroke-width="1"/>
<path d="M1542.9 1114.5h9.6l-4.8 5z" fill="#dcdcdc"/>
<path d="M1574.6 1108.8L1577.8 1119.8L1583.1999999999998 1127.6000000000001L1574.6 1122.8L1566.0 1127.6000000000001L1571.3999999999999 1119.8z" fill="#ffffff"/>
<circle cx="1582.4" cy="1112.4" r="2.8" fill="none" stroke="#ffffff" stroke-width="1"/>
<path d="M1604 1108.8L1607.2 1119.8L1612.6 1127.6000000000001L1604 1122.8L1595.4 1127.6000000000001L1600.8 1119.8z" fill="#cfcfcf"/>
<path d="M1613.6 1108.6L1609.6 1113.6H1612L1610.4 1117.2L1614.8 1112H1612.4z" fill="#cfcfcf"/>
<path d="M1635.6 1108.8L1638.8 1119.8L1644.1999999999998 1127.6000000000001L1635.6 1122.8L1627.0 1127.6000000000001L1632.3999999999999 1119.8z" fill="#cfcfcf"/>
<text x="1657.9" y="1124.0" textLength="14.0" lengthAdjust="spacingAndGlyphs" font-family='"Liberation Sans", sans-serif' font-size="14.5" fill="#f0f0f0" font-weight="normal" font-style="normal" >1:1</text>
<path d="M1678.4 1114.7h9.6l-4.8 5z" fill="#dcdcdc"/>
<rect x="-2.1" y="-10" width="4.2" height="5" fill="#dcdcdc" transform="translate(1710.8,1117.7) rotate(0)"/><rect x="-2.1" y="-10" width="4.2" height="5" fill="#dcdcdc" transform="translate(1710.8,1117.7) rotate(45)"/><rect x="-2.1" y="-10" width="4.2" height="5" fill="#dcdcdc" transform="translate(1710.8,1117.7) rotate(90)"/><rect x="-2.1" y="-10" width="4.2" height="5" fill="#dcdcdc" transform="translate(1710.8,1117.7) rotate(135)"/><rect x="-2.1" y="-10" width="4.2" height="5" fill="#dcdcdc" transform="translate(1710.8,1117.7) rotate(180)"/><rect x="-2.1" y="-10" width="4.2" height="5" fill="#dcdcdc" transform="translate(1710.8,1117.7) rotate(225)"/><rect x="-2.1" y="-10" width="4.2" height="5" fill="#dcdcdc" transform="translate(1710.8,1117.7) rotate(270)"/><rect x="-2.1" y="-10" width="4.2" height="5" fill="#dcdcdc" transform="translate(1710.8,1117.7) rotate(315)"/><circle cx="1710.8" cy="1117.7" r="6" fill="none" stroke="#dcdcdc" stroke-width="4"/>
<path d="M1731.1 1114.7h9.6l-4.8 5z" fill="#dcdcdc"/>
<path d="M1752.4 1117.5H1771.2M1761.8 1108.4V1126.6" fill="none" stroke="#ececec" stroke-width="2.4"/>
<rect x="1785.4" y="1108.8" width="7" height="7" fill="none" stroke="#e0e0e0" stroke-width="1"/><circle cx="1800.4" cy="1116.6" r="4.2" fill="none" stroke="#e0e0e0" stroke-width="1"/><path d="M1792.4 1119.4L1797 1127.4H1787.8z" fill="none" stroke="#e0e0e0" stroke-width="1"/>
<path d="M1818.2 1105.4H1833.6L1838.6 1110.4V1124.4H1818.2z" fill="#3f73b8"/><path d="M1833.6 1105.4L1838.6 1110.4H1833.6z" fill="#8db7e8"/>
<path d="M1823.4 1105.6V1121M1818.4 1111H1834" fill="none" stroke="#ececec" stroke-width="1.1"/>
<circle cx="1823.4" cy="1111" r="2" fill="#3f73b8" stroke="#ececec" stroke-width="0.9"/>
<path d="M1818.2 1118.4H1829L1827.4 1121L1829 1124.8H1818.2z" fill="#f2b52a"/>
<path d="M1827.6 1123.2L1832.6 1127.6L1841.6 1117.4" fill="none" stroke="#45b553" stroke-width="2.6"/>
<rect x="1856.2" y="1110.6" width="19.4" height="14" fill="none" stroke="#e0e0e0" stroke-width="1"/>
<path d="M1867.4 1116.4L1872.6 1112.6M1864.4 1118.8L1859.2 1122.6" fill="none" stroke="#ececec" stroke-width="1.1"/>
<path d="M1873.6 1111.8L1869.4 1112.4L1872.8 1115.8zM1858.2 1123.4L1862.4 1122.8L1859 1119.4z" fill="#ececec"/>
<rect x="1886" y="1110.4" width="20.4" height="2.2" fill="#ececec" />
<rect x="1886" y="1117.6" width="20.4" height="2.2" fill="#ececec" />
<rect x="1886" y="1124.8" width="20.4" height="2.2" fill="#ececec" />
<rect x="0" y="1140" width="1919" height="59" fill="#f3e7e2" />
<rect x="0" y="1139" width="1917" height="1.5" fill="#1a9fe0" />
<defs><linearGradient id="gv" x1="0" y1="0" x2="0" y2="1"><stop offset="0" stop-color="#5b95f7"/><stop offset="1" stop-color="#7a57ef"/></linearGradient><linearGradient id="gw" gradientUnits="userSpaceOnUse" x1="474.9" y1="1155.9" x2="503.8" y2="1185"><stop offset="0" stop-color="#55c8ff"/><stop offset="1" stop-color="#0a70d0"/></linearGradient><linearGradient id="gf" x1="0" y1="0" x2="0" y2="1"><stop offset="0" stop-color="#ffd75e"/><stop offset="1" stop-color="#f5b400"/></linearGradient></defs>
<rect x="28.2" y="1158.8" width="24" height="20.4" rx="4" fill="url(#gv)"/><path d="M37.2 1164.6L45.2 1169L37.2 1173.6z" fill="#ffffff"/>
<circle cx="48.4" cy="1157.8" r="9.8" fill="#c42b1c"/>
<text x="44.8" y="1162.6"  font-family='"Liberation Sans", sans-serif' font-size="13.5" fill="#ffffff" font-weight="normal" font-style="normal" >2</text>
<text x="65.7" y="1164.4" textLength="105.8" lengthAdjust="spacingAndGlyphs" font-family='"Liberation Sans", sans-serif' font-size="15.3" fill="#1b1b1b" font-weight="normal" font-style="normal" >Trending videos</text>
<text x="64.2" y="1184.4" textLength="118.8" lengthAdjust="spacingAndGlyphs" font-family='"Liberation Sans", sans-serif' font-size="15.3" fill="#5c5c5c" font-weight="normal" font-style="normal" >Filhotes de lince...</text>
<rect x="474.9" y="1155.9" width="13.9" height="14.1" rx="1" fill="url(#gw)"/>
<rect x="489.9" y="1155.9" width="13.9" height="14.1" rx="1" fill="url(#gw)"/>
<rect x="474.9" y="1170.9" width="13.9" height="14.1" rx="1" fill="url(#gw)"/>
<rect x="489.9" y="1170.9" width="13.9" height="14.1" rx="1" fill="url(#gw)"/>
<rect x="521.9" y="1150.9" width="273.2" height="38" rx="19" fill="#fbf7f5" stroke="#e2d8d4" stroke-width="1"/>
<circle cx="543.6" cy="1168.6" r="6.6" fill="none" stroke="#1c1c1c" stroke-width="1.9"/><path d="M548.4 1173.6L553 1178.4" stroke="#1c1c1c" stroke-width="2.2" stroke-linecap="round"/>
<text x="568.1" y="1176.8" textLength="63.9" lengthAdjust="spacingAndGlyphs" font-family='"Liberation Sans", sans-serif' font-size="17" fill="#4a4a4a" font-weight="normal" font-style="normal" >Procurar</text>
<rect x="811.4" y="1163.8" width="22.6" height="20" rx="2" fill="#262626"/><rect x="819" y="1156" width="22" height="19.6" rx="2" fill="#ffffff" fill-opacity="0.82" stroke="#e6e0dc" stroke-width="0.6"/>
<defs><linearGradient id="gc1" x1="0" y1="0" x2="1" y2="1"><stop offset="0" stop-color="#2a7ff0"/><stop offset="0.5" stop-color="#27c2b5"/><stop offset="1" stop-color="#f3c53a"/></linearGradient><linearGradient id="gc2" x1="1" y1="0" x2="0" y2="1"><stop offset="0" stop-color="#b55cf0"/><stop offset="0.5" stop-color="#f0568f"/><stop offset="1" stop-color="#f79a3a"/></linearGradient></defs>
<path d="M874 1155.4H884Q887 1155.4 886 1158.6L881.6 1172.6Q880.4 1176.4 876.4 1176.4H869.4Q865 1176.4 866.2 1172L869.4 1160Q870.6 1155.4 874 1155.4z" fill="url(#gc1)"/>
<path d="M887.6 1183.2H877.6Q874.6 1183.2 875.6 1180L880 1166Q881.2 1162.2 885.2 1162.2H892.2Q896.6 1162.2 895.4 1166.6L892.2 1178.6Q891 1183.2 887.6 1183.2z" fill="url(#gc2)"/>
<path d="M878.8 1166.4H883.4L881.2 1172.6H876.8z" fill="#ffffff" fill-opacity="0.85"/>
<path d="M921 1160.4Q921 1157 924.4 1157H931.4L934.6 1160H947.6Q951 1160 951 1163.4V1166H921z" fill="#e8a300"/><rect x="921" y="1162.4" width="30" height="21" rx="2.6" fill="url(#gf)"/><path d="M927 1183.4V1178.6Q927 1176 929.6 1176H942.4Q945 1176 945 1178.6V1183.4z" fill="#1a78d4"/><rect x="931" y="1178.6" width="10" height="1.8" rx="0.9" fill="#0c4a8c"/>
<rect x="932.0" y="1190.2" width="8" height="3.4" rx="1.7" fill="#8a8582"/>
<defs><linearGradient id="ge" x1="0" y1="0" x2="1" y2="1"><stop offset="0" stop-color="#35c1f1"/><stop offset="1" stop-color="#0c59a4"/></linearGradient><linearGradient id="ge2" x1="0" y1="0" x2="1" y2="0"><stop offset="0" stop-color="#2bc4e8"/><stop offset="1" stop-color="#7bd04a"/></linearGradient></defs>
<circle cx="991" cy="1169.6" r="15" fill="url(#ge)"/><path d="M977.4 1163.6A15 15 0 0 1 1006 1168.6Q1006 1174 1000 1175Q995.4 1175.4 996 1171Q996.6 1165 989.6 1164.6Q982 1164.8 977.4 1170z" fill="url(#ge2)"/><path d="M989 1173Q988.6 1178.6 996 1180.4Q1001 1181 1004.6 1177.6Q1001 1184.8 992.6 1184.4Q984.4 1182.6 983.6 1175.4Q983.8 1169.6 989.8 1168.6Q988.6 1170.6 989 1173z" fill="#f3e7e2"/>
<path d="M1039.6 1161V1159Q1039.6 1156.4 1042.2 1156.4H1049Q1051.6 1156.4 1051.6 1159V1161" fill="none" stroke="#4cc2ff" stroke-width="1.8"/><path d="M1031 1160.6H1060.2V1180.6Q1060.2 1184.6 1056.2 1184.6H1035Q1031 1184.6 1031 1180.6z" fill="#1b4a94"/>
<rect x="1039.6" y="1166" width="5.8" height="5.8" fill="#f25022" />
<rect x="1046.4" y="1166" width="5.8" height="5.8" fill="#7fba00" />
<rect x="1039.6" y="1172.8" width="5.8" height="5.8" fill="#00a4ef" />
<rect x="1046.4" y="1172.8" width="5.8" height="5.8" fill="#ffb900" />
<rect x="1086" y="1154.8" width="30.2" height="29.8" fill="#b5121b" stroke="#8e0d14" stroke-width="1" stroke-dasharray="1.6 1"/>
<text x="1090.6" y="1180.0" textLength="22.0" lengthAdjust="spacingAndGlyphs" font-family='"Liberation Sans", sans-serif' font-size="26" fill="#ffffff" font-weight="bold" font-style="italic" >Fz</text>
<rect x="1096.7" y="1190.2" width="8" height="3.4" rx="1.7" fill="#8a8582"/>
<path d="M1142 1158H1162.6L1164.6 1182.8H1143.6z" fill="#dfe8c0" stroke="#8f9a70" stroke-width="0.8"/><path d="M1143 1164Q1152 1160 1163 1164L1164.4 1182.6H1143.8z" fill="#8fcf4a"/>
<rect x="1143.6" y="1156.6" width="1.2" height="3" fill="#777" />
<rect x="1146.1" y="1156.6" width="1.2" height="3" fill="#777" />
<rect x="1148.6" y="1156.6" width="1.2" height="3" fill="#777" />
<rect x="1151.1" y="1156.6" width="1.2" height="3" fill="#777" />
<rect x="1153.6" y="1156.6" width="1.2" height="3" fill="#777" />
<rect x="1156.1" y="1156.6" width="1.2" height="3" fill="#777" />
<rect x="1158.6" y="1156.6" width="1.2" height="3" fill="#777" />
<rect x="1161.1" y="1156.6" width="1.2" height="3" fill="#777" />
<ellipse cx="1152" cy="1170.6" rx="6" ry="4.4" fill="#5f9a2a"/><circle cx="1154.6" cy="1165.6" r="2.6" fill="#f4f4f4" stroke="#3a5a1a" stroke-width="0.7"/><circle cx="1154.8" cy="1165.6" r="0.9" fill="#222"/><path d="M1146 1175Q1152 1178.6 1159 1175" stroke="#2f5a10" stroke-width="1" fill="none"/>
<path d="M1168.6 1156.2L1170 1157L1163 1176.6L1161 1178.8L1161 1175.8z" fill="#e8a322" stroke="#8a5a10" stroke-width="0.5"/>
<rect x="1151.8" y="1190.2" width="8" height="3.4" rx="1.7" fill="#8a8582"/>
<circle cx="1209" cy="1168.4" r="10.6" fill="none" stroke="#8cb82b" stroke-width="5.6"/><path d="M1211.4 1170.6L1216 1166.8L1226 1178.8V1183.4H1221.6z" fill="#8cb82b" stroke="#f3e7e2" stroke-width="0.8"/><path d="M1204.6 1163.4L1213 1165.4L1215.4 1172.6L1208.6 1172z" fill="#f0a21e"/><path d="M1204.6 1163.4L1210 1169L1208.6 1172z" fill="#ee7913"/>
<rect x="1242.4" y="1146.4" width="47.6" height="47.6" rx="5" fill="#fbf6f3" stroke="#ece2de" stroke-width="0.8"/>
<path d="M1251.4 1159.4L1256.6 1156.2V1182L1251.4 1185.2z" fill="#f0557f"/><path d="M1256.6 1154.2H1277Q1280.4 1154.2 1280.4 1157.6V1175.6H1256.6z" fill="#e0114f"/><path d="M1256.6 1175.6H1280.4V1181.6Q1280.4 1185 1277 1185H1256.6z" fill="#8a0e33"/>
<text x="1262.6" y="1171.4" textLength="12.0" lengthAdjust="spacingAndGlyphs" font-family='"Liberation Sans", sans-serif' font-size="17" fill="#ffffff" font-weight="bold" font-style="normal" >A</text>
<text x="1261.0" y="1183.0" textLength="15.0" lengthAdjust="spacingAndGlyphs" font-family='"Liberation Sans", sans-serif' font-size="6.6" fill="#ffffff" font-weight="bold" font-style="normal" >CAD</text>
<rect x="1255.8" y="1190" width="20" height="3.6" rx="1.8" fill="#18b1c6"/>
<path d="M1320.90 1162.70L1334.22 1162.70A15 15 0 0 0 1308.27 1161.52L1314.92 1173.05A6.9 6.9 0 0 1 1320.90 1162.70z" fill="#ea4335"/>
<path d="M1326.88 1173.05L1320.22 1184.58A15 15 0 0 0 1334.22 1162.70L1320.90 1162.70A6.9 6.9 0 0 1 1326.88 1173.05z" fill="#fbbc04"/>
<path d="M1314.92 1173.05L1308.27 1161.52A15 15 0 0 0 1320.22 1184.58L1326.88 1173.05A6.9 6.9 0 0 1 1314.92 1173.05z" fill="#34a853"/>
<circle cx="1320.9" cy="1169.6" r="6.9" fill="#ffffff"/><circle cx="1320.9" cy="1169.6" r="5.4" fill="#4285f4"/>
<rect x="1316.9" y="1190.2" width="8" height="3.4" rx="1.7" fill="#8a8582"/>
<path d="M1375.4 1157A13 13 0 1 1 1369 1181.4L1361.6 1183.6L1363.8 1176.6A13 13 0 0 1 1375.4 1157z" fill="#f3e7e2" stroke="#2aa84a" stroke-width="2.6"/>
<path d="M1370.6 1164.2Q1369 1165.4 1369.6 1168Q1371.4 1173.6 1377.6 1176.2Q1380.2 1176.8 1381.6 1174.6L1381.4 1173.4L1378.4 1171.8L1376.8 1173.2Q1373.8 1171.8 1372.6 1168.8L1374 1167.4L1372.6 1164.2z" fill="#2aa84a"/>
<circle cx="1386.8" cy="1158.4" r="9.6" fill="#1ab0c8" stroke="#f3e7e2" stroke-width="1"/>
<text x="1383.2" y="1163.2"  font-family='"Liberation Sans", sans-serif' font-size="13.5" fill="#ffffff" font-weight="normal" font-style="normal" >1</text>
<rect x="-3.4" y="-15" width="6.8" height="7" rx="1" fill="#6d7885" transform="translate(1431,1169.8) rotate(0)"/><rect x="-3.4" y="-15" width="6.8" height="7" rx="1" fill="#6d7885" transform="translate(1431,1169.8) rotate(45)"/><rect x="-3.4" y="-15" width="6.8" height="7" rx="1" fill="#6d7885" transform="translate(1431,1169.8) rotate(90)"/><rect x="-3.4" y="-15" width="6.8" height="7" rx="1" fill="#6d7885" transform="translate(1431,1169.8) rotate(135)"/><rect x="-3.4" y="-15" width="6.8" height="7" rx="1" fill="#6d7885" transform="translate(1431,1169.8) rotate(180)"/><rect x="-3.4" y="-15" width="6.8" height="7" rx="1" fill="#6d7885" transform="translate(1431,1169.8) rotate(225)"/><rect x="-3.4" y="-15" width="6.8" height="7" rx="1" fill="#6d7885" transform="translate(1431,1169.8) rotate(270)"/><rect x="-3.4" y="-15" width="6.8" height="7" rx="1" fill="#6d7885" transform="translate(1431,1169.8) rotate(315)"/><circle cx="1431" cy="1169.8" r="9.4" fill="none" stroke="#6d7885" stroke-width="5.6"/><circle cx="1431" cy="1169.8" r="5.2" fill="#0f5fc0"/><circle cx="1431" cy="1169.8" r="7" fill="none" stroke="#e9eef3" stroke-width="1.4"/>
<rect x="1427.0" y="1190.2" width="8" height="3.4" rx="1.7" fill="#8a8582"/>
<path d="M1612.2 1173L1618.2 1166.8L1624.2 1173" fill="none" stroke="#1c1c1c" stroke-width="1.8" stroke-linecap="round" stroke-linejoin="round"/>
<path d="M1652.4 1176.4Q1648.4 1176 1648.6 1172.4Q1649 1169.4 1652.2 1169.2Q1652.6 1164.2 1657.6 1163.6Q1661.6 1163.6 1663 1167Q1667.6 1167 1667.8 1171.6Q1667.6 1176 1663.6 1176.4z" fill="#9c9c9c" stroke="#1c1c1c" stroke-width="1.4" stroke-linecap="round" stroke-linejoin="round"/>
<path d="M1650.6 1163.2L1666.6 1177.2" fill="none" stroke="#1c1c1c" stroke-width="1.5" stroke-linecap="round" stroke-linejoin="round"/>
<path d="M1688.6 1168.2Q1698 1159.6 1707.2 1168.2M1691.6 1171.2Q1698 1165.4 1704.2 1171.2M1694.6 1174Q1698 1171 1701.2 1174" fill="none" stroke="#1c1c1c" stroke-width="1.5" stroke-linecap="round" stroke-linejoin="round"/>
<circle cx="1698" cy="1175.6" r="1.3" fill="#1c1c1c"/>
<path d="M1718.6 1166.6H1721.8L1726 1162.6V1176.6L1721.8 1172.6H1718.6z" fill="none" stroke="#1c1c1c" stroke-width="1.4" stroke-linecap="round" stroke-linejoin="round"/>
<path d="M1729.6 1166.4L1736 1172.8M1736 1166.4L1729.6 1172.8" fill="none" stroke="#1c1c1c" stroke-width="1.4" stroke-linecap="round" stroke-linejoin="round"/>
<rect x="1748.4" y="1164.8" width="16.8" height="10.4" rx="2.2" fill="none" stroke="#1c1c1c" stroke-width="1.4"/><path d="M1766 1168V1172" stroke="#1c1c1c" stroke-width="2" stroke-linecap="round"/><path d="M1751 1173V1168.6L1753.2 1166.8H1762.6V1173z" fill="#1c1c1c"/><path d="M1752.4 1160.6L1749.4 1166H1752L1750.6 1169.6L1754.8 1164.4H1752.2z" fill="#1c1c1c" stroke="#f3e7e2" stroke-width="0.6"/>
<text x="1830.5" y="1164.6" textLength="34.8" lengthAdjust="spacingAndGlyphs" font-family='"Liberation Sans", sans-serif' font-size="14.5" fill="#1b1b1b" font-weight="normal" font-style="normal" >10:22</text>
<text x="1789.0" y="1184.6" textLength="76.3" lengthAdjust="spacingAndGlyphs" font-family='"Liberation Sans", sans-serif' font-size="14.5" fill="#1b1b1b" font-weight="normal" font-style="normal" >09/10/2025</text>
<path d="M1877.4 1176.2Q1879.8 1174 1879.8 1170Q1880 1163.2 1885.4 1162.8Q1890.8 1163.2 1891 1170Q1891 1174 1893.4 1176.2z" fill="#1c1c1c"/><path d="M1883 1178H1887.8Q1885.4 1181 1883 1178z" fill="#1c1c1c"/>
<text x="1882.6" y="1172.4"  font-family='"Liberation Sans", sans-serif' font-size="7.5" fill="#f3e7e2" font-weight="bold" font-style="normal" >z</text>
<text x="1888.4" y="1167.0"  font-family='"Liberation Sans", sans-serif' font-size="8.5" fill="#1c1c1c" font-weight="bold" font-style="normal" >z</text>
</svg>
</body></html>
